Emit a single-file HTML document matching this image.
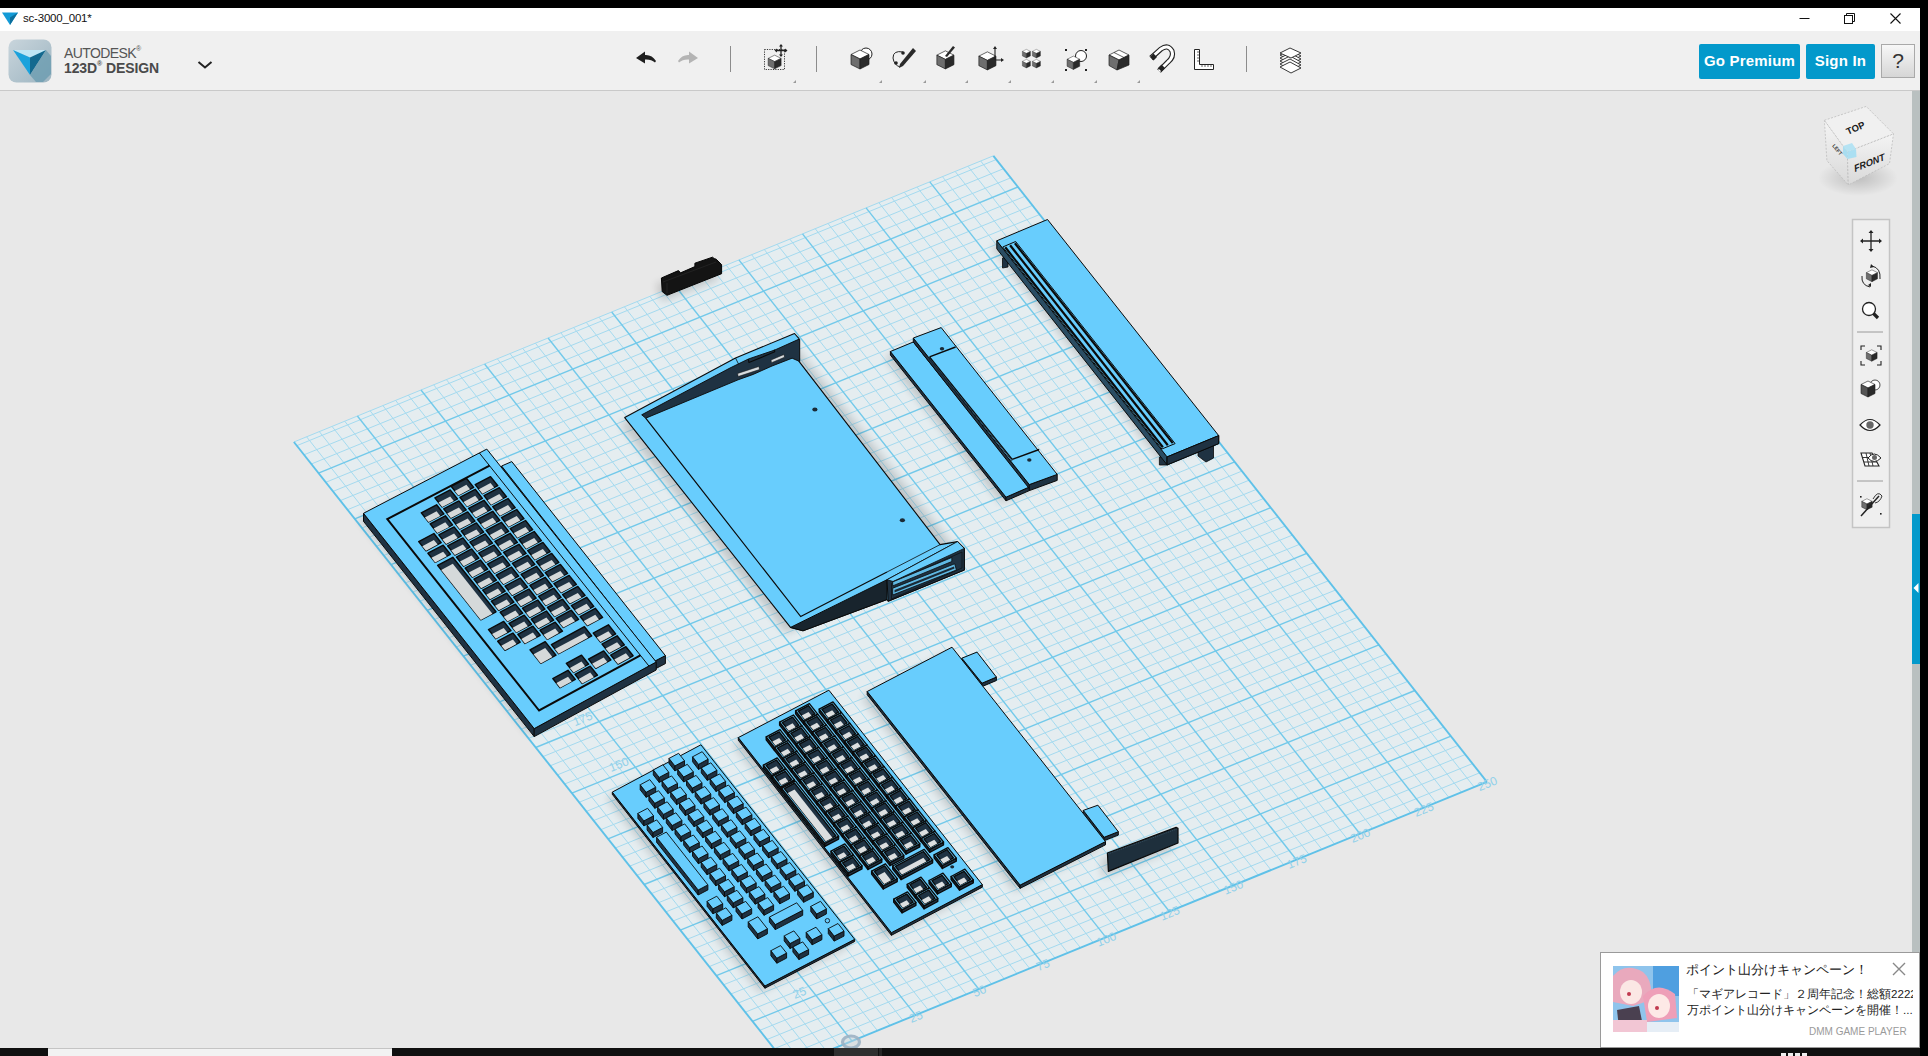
<!DOCTYPE html>
<html><head><meta charset="utf-8"><style>
*{margin:0;padding:0;box-sizing:border-box}
html,body{width:1928px;height:1056px;overflow:hidden;background:#e8e8e8;font-family:"Liberation Sans",sans-serif}
.abs{position:absolute}
#top{left:0;top:0;width:1928px;height:8px;background:#000}
#title{left:0;top:8px;width:1920px;height:23px;background:#fff}
#tb{left:0;top:31px;width:1920px;height:60px;background:#f0f0f0;border-bottom:1px solid #c9c9c9}
#rblack{left:1920px;top:0;width:8px;height:1056px;background:#000}
#vp{left:0;top:91px;width:1920px;height:957px;background:#e8e8e8;overflow:hidden}
#task{left:0;top:1048px;width:1920px;height:8px;background:#101010}
.btn{position:absolute;top:44px;height:35px;background:#0399cb;color:#fff;font-weight:bold;font-size:15px;line-height:33px;text-align:center;border-radius:2px;letter-spacing:0.2px}
</style></head><body>
<div class="abs" id="vp"><svg width="1920" height="957" viewBox="0 91 1920 957" style="position:absolute;left:0;top:0"><polygon points="788.6,1066.9 1486.9,781.9 993.4,155.8 293.9,442.0" fill="#e5edf0"/><g stroke="#a4daef" stroke-width="1.0"><line x1="801.3" y1="1061.7" x2="306.6" y2="436.8" /><line x1="814.0" y1="1056.5" x2="319.3" y2="431.6" /><line x1="826.7" y1="1051.4" x2="332.0" y2="426.4" /><line x1="839.4" y1="1046.2" x2="344.7" y2="421.2" /><line x1="864.7" y1="1035.8" x2="370.1" y2="410.8" /><line x1="877.4" y1="1030.6" x2="382.9" y2="405.6" /><line x1="890.1" y1="1025.5" x2="395.6" y2="400.4" /><line x1="902.8" y1="1020.3" x2="408.3" y2="395.2" /><line x1="928.2" y1="1009.9" x2="433.7" y2="384.8" /><line x1="940.9" y1="1004.8" x2="446.4" y2="379.6" /><line x1="953.6" y1="999.6" x2="459.1" y2="374.4" /><line x1="966.3" y1="994.4" x2="471.8" y2="369.2" /><line x1="991.6" y1="984.0" x2="497.3" y2="358.8" /><line x1="1004.3" y1="978.9" x2="510.0" y2="353.6" /><line x1="1017.0" y1="973.7" x2="522.7" y2="348.4" /><line x1="1029.7" y1="968.5" x2="535.4" y2="343.2" /><line x1="1055.1" y1="958.1" x2="560.8" y2="332.8" /><line x1="1067.8" y1="952.9" x2="573.6" y2="327.6" /><line x1="1080.5" y1="947.8" x2="586.3" y2="322.4" /><line x1="1093.2" y1="942.6" x2="599.0" y2="317.2" /><line x1="1118.6" y1="932.2" x2="624.4" y2="306.8" /><line x1="1131.3" y1="927.0" x2="637.1" y2="301.6" /><line x1="1144.0" y1="921.9" x2="649.9" y2="296.4" /><line x1="1156.7" y1="916.7" x2="662.6" y2="291.2" /><line x1="1182.1" y1="906.3" x2="688.0" y2="280.8" /><line x1="1194.8" y1="901.1" x2="700.7" y2="275.6" /><line x1="1207.5" y1="895.9" x2="713.5" y2="270.4" /><line x1="1220.2" y1="890.8" x2="726.2" y2="265.1" /><line x1="1245.6" y1="880.4" x2="751.6" y2="254.7" /><line x1="1258.3" y1="875.2" x2="764.3" y2="249.5" /><line x1="1271.0" y1="870.0" x2="777.1" y2="244.3" /><line x1="1283.7" y1="864.8" x2="789.8" y2="239.1" /><line x1="1309.1" y1="854.5" x2="815.2" y2="228.7" /><line x1="1321.8" y1="849.3" x2="828.0" y2="223.5" /><line x1="1334.5" y1="844.1" x2="840.7" y2="218.3" /><line x1="1347.2" y1="838.9" x2="853.4" y2="213.1" /><line x1="1372.6" y1="828.6" x2="878.9" y2="202.7" /><line x1="1385.3" y1="823.4" x2="891.6" y2="197.5" /><line x1="1398.0" y1="818.2" x2="904.3" y2="192.3" /><line x1="1410.7" y1="813.0" x2="917.0" y2="187.1" /><line x1="1436.1" y1="802.6" x2="942.5" y2="176.7" /><line x1="1448.8" y1="797.4" x2="955.2" y2="171.5" /><line x1="1461.5" y1="792.3" x2="967.9" y2="166.2" /><line x1="1474.2" y1="787.1" x2="980.7" y2="161.0" /><line x1="781.4" y1="1057.8" x2="1479.7" y2="772.8" /><line x1="774.2" y1="1048.7" x2="1472.5" y2="763.6" /><line x1="767.0" y1="1039.5" x2="1465.3" y2="754.5" /><line x1="759.7" y1="1030.4" x2="1458.1" y2="745.4" /><line x1="745.3" y1="1012.2" x2="1443.7" y2="727.1" /><line x1="738.1" y1="1003.1" x2="1436.5" y2="718.0" /><line x1="730.9" y1="994.0" x2="1429.3" y2="708.8" /><line x1="723.6" y1="984.8" x2="1422.1" y2="699.7" /><line x1="709.2" y1="966.6" x2="1407.7" y2="681.4" /><line x1="702.0" y1="957.5" x2="1400.5" y2="672.3" /><line x1="694.8" y1="948.4" x2="1393.3" y2="663.1" /><line x1="687.5" y1="939.2" x2="1386.1" y2="654.0" /><line x1="673.1" y1="921.0" x2="1371.7" y2="635.7" /><line x1="665.9" y1="911.9" x2="1364.5" y2="626.6" /><line x1="658.6" y1="902.7" x2="1357.3" y2="617.4" /><line x1="651.4" y1="893.6" x2="1350.1" y2="608.3" /><line x1="637.0" y1="875.3" x2="1335.6" y2="590.0" /><line x1="629.7" y1="866.2" x2="1328.4" y2="580.8" /><line x1="622.5" y1="857.1" x2="1321.2" y2="571.7" /><line x1="615.3" y1="848.0" x2="1314.0" y2="562.6" /><line x1="600.8" y1="829.7" x2="1299.6" y2="544.3" /><line x1="593.6" y1="820.6" x2="1292.4" y2="535.1" /><line x1="586.4" y1="811.4" x2="1285.2" y2="526.0" /><line x1="579.1" y1="802.3" x2="1278.0" y2="516.8" /><line x1="564.7" y1="784.0" x2="1263.5" y2="498.5" /><line x1="557.4" y1="774.9" x2="1256.3" y2="489.4" /><line x1="550.2" y1="765.8" x2="1249.1" y2="480.2" /><line x1="543.0" y1="756.6" x2="1241.9" y2="471.1" /><line x1="528.5" y1="738.4" x2="1227.5" y2="452.7" /><line x1="521.3" y1="729.2" x2="1220.2" y2="443.6" /><line x1="514.0" y1="720.1" x2="1213.0" y2="434.4" /><line x1="506.8" y1="710.9" x2="1205.8" y2="425.3" /><line x1="492.3" y1="692.7" x2="1191.4" y2="407.0" /><line x1="485.1" y1="683.5" x2="1184.2" y2="397.8" /><line x1="477.9" y1="674.4" x2="1176.9" y2="388.7" /><line x1="470.6" y1="665.2" x2="1169.7" y2="379.5" /><line x1="456.2" y1="647.0" x2="1155.3" y2="361.2" /><line x1="448.9" y1="637.8" x2="1148.1" y2="352.0" /><line x1="441.7" y1="628.7" x2="1140.8" y2="342.9" /><line x1="434.4" y1="619.5" x2="1133.6" y2="333.7" /><line x1="420.0" y1="601.2" x2="1119.2" y2="315.4" /><line x1="412.7" y1="592.1" x2="1111.9" y2="306.2" /><line x1="405.5" y1="582.9" x2="1104.7" y2="297.0" /><line x1="398.2" y1="573.8" x2="1097.5" y2="287.9" /><line x1="383.7" y1="555.5" x2="1083.0" y2="269.5" /><line x1="376.5" y1="546.3" x2="1075.8" y2="260.4" /><line x1="369.3" y1="537.2" x2="1068.6" y2="251.2" /><line x1="362.0" y1="528.0" x2="1061.4" y2="242.0" /><line x1="347.5" y1="509.7" x2="1046.9" y2="223.7" /><line x1="340.3" y1="500.6" x2="1039.7" y2="214.5" /><line x1="333.0" y1="491.4" x2="1032.4" y2="205.4" /><line x1="325.8" y1="482.3" x2="1025.2" y2="196.2" /><line x1="311.3" y1="464.0" x2="1010.8" y2="177.8" /><line x1="304.0" y1="454.8" x2="1003.5" y2="168.7" /><line x1="296.8" y1="445.7" x2="996.3" y2="159.5" /><line x1="293.9" y1="442.0" x2="993.4" y2="155.8" /></g><g stroke="#72c9ea" stroke-width="1.4"><line x1="852.0" y1="1041.0" x2="357.4" y2="416.0" /><line x1="915.5" y1="1015.1" x2="421.0" y2="390.0" /><line x1="978.9" y1="989.2" x2="484.6" y2="364.0" /><line x1="1042.4" y1="963.3" x2="548.1" y2="338.0" /><line x1="1105.9" y1="937.4" x2="611.7" y2="312.0" /><line x1="1169.4" y1="911.5" x2="675.3" y2="286.0" /><line x1="1232.9" y1="885.6" x2="738.9" y2="259.9" /><line x1="1296.4" y1="859.7" x2="802.5" y2="233.9" /><line x1="1359.9" y1="833.7" x2="866.1" y2="207.9" /><line x1="1423.4" y1="807.8" x2="929.8" y2="181.9" /><line x1="752.5" y1="1021.3" x2="1450.9" y2="736.2" /><line x1="716.4" y1="975.7" x2="1414.9" y2="690.5" /><line x1="680.3" y1="930.1" x2="1378.9" y2="644.8" /><line x1="644.2" y1="884.5" x2="1342.8" y2="599.1" /><line x1="608.1" y1="838.8" x2="1306.8" y2="553.4" /><line x1="571.9" y1="793.2" x2="1270.7" y2="507.7" /><line x1="535.7" y1="747.5" x2="1234.7" y2="461.9" /><line x1="499.6" y1="701.8" x2="1198.6" y2="416.1" /><line x1="463.4" y1="656.1" x2="1162.5" y2="370.3" /><line x1="427.2" y1="610.4" x2="1126.4" y2="324.5" /><line x1="391.0" y1="564.6" x2="1090.3" y2="278.7" /><line x1="354.8" y1="518.9" x2="1054.1" y2="232.9" /><line x1="318.5" y1="473.1" x2="1018.0" y2="187.0" /></g><g stroke="#5fc1e8" stroke-width="1.9"><line x1="788.6" y1="1066.9" x2="1486.9" y2="781.9" /><line x1="1486.9" y1="781.9" x2="993.4" y2="155.8" /><line x1="788.6" y1="1066.9" x2="293.9" y2="442.0" /></g><text transform="translate(917.5,1020.6) rotate(-22)" font-size="12" fill="#92d1ea" text-anchor="middle" style="font-family:'Liberation Sans',sans-serif">25</text><text transform="translate(980.9,994.7) rotate(-22)" font-size="12" fill="#92d1ea" text-anchor="middle" style="font-family:'Liberation Sans',sans-serif">50</text><text transform="translate(1044.4,968.8) rotate(-22)" font-size="12" fill="#92d1ea" text-anchor="middle" style="font-family:'Liberation Sans',sans-serif">75</text><text transform="translate(1107.9,942.9) rotate(-22)" font-size="12" fill="#92d1ea" text-anchor="middle" style="font-family:'Liberation Sans',sans-serif">100</text><text transform="translate(1171.4,917.0) rotate(-22)" font-size="12" fill="#92d1ea" text-anchor="middle" style="font-family:'Liberation Sans',sans-serif">125</text><text transform="translate(1234.9,891.1) rotate(-22)" font-size="12" fill="#92d1ea" text-anchor="middle" style="font-family:'Liberation Sans',sans-serif">150</text><text transform="translate(1298.4,865.2) rotate(-22)" font-size="12" fill="#92d1ea" text-anchor="middle" style="font-family:'Liberation Sans',sans-serif">175</text><text transform="translate(1361.9,839.2) rotate(-22)" font-size="12" fill="#92d1ea" text-anchor="middle" style="font-family:'Liberation Sans',sans-serif">200</text><text transform="translate(1425.4,813.3) rotate(-22)" font-size="12" fill="#92d1ea" text-anchor="middle" style="font-family:'Liberation Sans',sans-serif">225</text><text transform="translate(1488.9,787.4) rotate(-22)" font-size="12" fill="#92d1ea" text-anchor="middle" style="font-family:'Liberation Sans',sans-serif">250</text><text transform="translate(801.0,996.4) rotate(-22)" font-size="12" fill="#92d1ea" text-anchor="middle" style="font-family:'Liberation Sans',sans-serif">25</text><text transform="translate(764.9,950.8) rotate(-22)" font-size="12" fill="#92d1ea" text-anchor="middle" style="font-family:'Liberation Sans',sans-serif">50</text><text transform="translate(728.8,905.2) rotate(-22)" font-size="12" fill="#92d1ea" text-anchor="middle" style="font-family:'Liberation Sans',sans-serif">75</text><text transform="translate(692.7,859.6) rotate(-22)" font-size="12" fill="#92d1ea" text-anchor="middle" style="font-family:'Liberation Sans',sans-serif">100</text><text transform="translate(656.5,813.9) rotate(-22)" font-size="12" fill="#92d1ea" text-anchor="middle" style="font-family:'Liberation Sans',sans-serif">125</text><text transform="translate(620.4,768.2) rotate(-22)" font-size="12" fill="#92d1ea" text-anchor="middle" style="font-family:'Liberation Sans',sans-serif">150</text><text transform="translate(584.2,722.6) rotate(-22)" font-size="12" fill="#92d1ea" text-anchor="middle" style="font-family:'Liberation Sans',sans-serif">175</text><ellipse cx="851.0" cy="1042.0" rx="8.5" ry="6" fill="#c9d3da" fill-opacity="0.5" stroke="#9db3c5" stroke-width="3.2" opacity="0.9"/><defs><filter id="blur" x="-20%" y="-20%" width="140%" height="140%"><feGaussianBlur stdDeviation="4.5"/></filter></defs><g filter="url(#blur)" fill="#000" opacity="0.16"><polygon points="656.0,284.0 717.0,270.0 717.0,280.0 662.0,301.0" fill="#000" /><polygon points="992.0,247.0 1043.0,226.0 1214.0,442.0 1162.0,463.0" fill="#000" /><polygon points="885.0,358.0 936.0,334.0 1052.0,480.0 1001.0,503.0" fill="#000" /><polygon points="620.0,424.0 790.0,340.0 959.0,554.0 786.0,633.0" fill="#000" /><polygon points="359.0,519.0 482.0,455.0 660.0,662.0 529.0,735.0" fill="#000" /><polygon points="862.0,698.0 947.0,653.0 1100.0,848.0 1015.0,891.0" fill="#000" /><polygon points="733.0,744.0 824.0,696.0 977.0,891.0 886.0,939.0" fill="#000" /><polygon points="607.0,798.0 696.0,751.0 850.0,945.0 760.0,992.0" fill="#000" /><polygon points="1102.0,859.0 1173.0,834.0 1173.0,849.0 1103.0,877.0" fill="#000" /></g><polygon points="661.4,278.0 678.4,270.6 680.7,272.8 694.9,266.6 694.9,263.2 712.5,257.2 714.2,258.6 716.2,259.2 721.6,264.6 721.6,273.7 667.0,295.3 662.2,291.6" fill="#141414" stroke="#050505" stroke-width="1.00" stroke-linejoin="round" /><path d="M663,282 L716,262 M667,293 L667,283" stroke="#262626" stroke-width="0.8" fill="none"/><polygon points="1002.5,258.0 1008.0,256.0 1008.0,267.0 1002.5,268.0" fill="#1f3242" stroke="#0a0a0a" stroke-width="0.80" stroke-linejoin="round" /><polygon points="1159.4,457.0 1167.5,457.0 1167.5,465.0 1159.4,465.0" fill="#1f3242" stroke="#0a0a0a" stroke-width="0.80" stroke-linejoin="round" /><polygon points="1198.0,447.0 1213.5,440.0 1213.5,458.0 1206.0,462.0 1198.0,456.0" fill="#1f3242" stroke="#0a0a0a" stroke-width="0.80" stroke-linejoin="round" /><polygon points="996.8,240.8 1167.1,456.9 1167.1,464.9 996.8,248.8" fill="#2a4d63" stroke="#0a0a0a" stroke-width="1.00" stroke-linejoin="round" /><polygon points="1167.1,456.9 1218.7,435.6 1218.7,443.6 1167.1,464.9" fill="#2a4d63" stroke="#0a0a0a" stroke-width="1.00" stroke-linejoin="round" /><polygon points="996.8,240.8 1047.5,219.5 1218.7,435.6 1167.1,456.9" fill="#68cdfd" stroke="#0a0a0a" stroke-width="1.00" stroke-linejoin="round" /><polygon points="1167.1,456.9 1218.7,435.6 1218.7,443.6 1167.1,464.9" fill="#1f3242" stroke="#0a0a0a" stroke-width="1.00" stroke-linejoin="round" /><polygon points="1002.7,247.0 1015.6,241.5 1175.1,443.6 1161.9,449.0" fill="#68cdfd" stroke="#0a0a0a" stroke-width="1.00" stroke-linejoin="round" /><path d="M1005.3,247.3 L1162.9,447.2" stroke="#0a0a0a" stroke-width="2.2"/><path d="M1010.1,245.3 L1167.8,445.2" stroke="#0a0a0a" stroke-width="2.2"/><path d="M1014.9,243.3 L1172.7,443.1" stroke="#0a0a0a" stroke-width="2.2"/><polygon points="890.4,351.5 1006.0,497.2 1006.0,500.8 890.4,355.1" fill="#1f3242" stroke="#0a0a0a" stroke-width="1.00" stroke-linejoin="round" /><polygon points="1006.0,497.2 1029.3,487.0 1029.3,490.6 1006.0,500.8" fill="#1f3242" stroke="#0a0a0a" stroke-width="1.00" stroke-linejoin="round" /><polygon points="890.4,351.5 913.3,342.0 1029.3,487.0 1006.0,497.2" fill="#68cdfd" stroke="#0a0a0a" stroke-width="1.00" stroke-linejoin="round" /><polygon points="913.3,338.0 1029.3,484.6 1029.3,488.6 913.3,342.0" fill="#1f3242" stroke="#0a0a0a" stroke-width="1.00" stroke-linejoin="round" /><polygon points="1029.3,484.6 1057.2,474.4 1057.2,480.4 1029.3,490.6" fill="#1f3242" stroke="#0a0a0a" stroke-width="1.00" stroke-linejoin="round" /><polygon points="913.3,338.0 941.2,327.6 1057.2,474.4 1029.3,484.6" fill="#68cdfd" stroke="#0a0a0a" stroke-width="1.00" stroke-linejoin="round" /><path d="M929.5,356.9 L955.6,347 M1012.2,459.4 L1039.2,449.5 M929.5,356.9 L1012.2,459.4" stroke="#0a0a0a" stroke-width="1.4" fill="none"/><path d="M929.5,358.5 L1012.2,461" stroke="#1f3242" stroke-width="1" fill="none"/><ellipse cx="942" cy="348.8" rx="2.2" ry="1.7" fill="#1a2a36"/><ellipse cx="1029.3" cy="460" rx="2.2" ry="1.7" fill="#1a2a36"/><polygon points="624.7,417.6 735.5,358.0 794.5,333.5 799.0,338.6 799.0,361.4 940.1,544.6 957.5,541.6 964.3,548.4 964.3,570.0 888.2,601.2 887.0,599.5 803.0,630.8 790.5,627.4" fill="#68cdfd" stroke="#0a0a0a" stroke-width="1.10" stroke-linejoin="round" /><polygon points="641.7,414.8 730.0,368.0 748.4,359.0 774.8,350.0 798.0,339.6 799.7,339.3 799.7,361.5 792.1,358.2 772.0,366.0 753.2,374.4 738.1,379.8 645.7,418.2" fill="#1f3242" stroke="#0a0a0a" stroke-width="0.90" stroke-linejoin="round" /><polygon points="737.6,373.5 758.9,366.5 759.5,369.5 738.2,376.5" fill="#d8dde0" stroke="#0a0a0a" stroke-width="0.50" stroke-linejoin="round" /><polygon points="771.0,360.0 784.0,354.5 784.5,357.2 771.5,362.7" fill="#d8dde0" stroke="#0a0a0a" stroke-width="0.50" stroke-linejoin="round" /><path d="M748.9,362.6 L774.8,351.8 M748.4,359 L749,363 M774.3,349.6 L774.8,352" stroke="#0a0a0a" stroke-width="1.1" fill="none"/><path d="M735.5,358 L738.5,364" stroke="#0a0a0a" stroke-width="0.8"/><path d="M645.7,418.2 L800.7,616.6 L887,572" stroke="#0a0a0a" stroke-width="1.2" fill="none"/><polygon points="790.5,627.4 887.0,579.7 887.0,599.5 803.0,630.8" fill="#18242d" stroke="#0a0a0a" stroke-width="1.00" stroke-linejoin="round" /><polygon points="887.0,579.7 957.5,541.6 964.3,548.4 964.3,570.0 888.2,601.2" fill="#1f3242" stroke="#0a0a0a" stroke-width="1.00" stroke-linejoin="round" /><polygon points="887.0,579.7 957.5,541.6 964.3,548.4 893.0,581.5" fill="#68cdfd" stroke="#0a0a0a" stroke-width="0.80" stroke-linejoin="round" /><polygon points="891.5,583.5 962.0,552.0 962.0,568.0 891.5,599.0" fill="#1f3242" stroke="#0a0a0a" stroke-width="0.60" stroke-linejoin="round" /><polygon points="892.7,581.9 951.8,557.5 951.8,561.5 892.7,585.9" fill="#5fb8e3" stroke="#0a0a0a" stroke-width="0.80" stroke-linejoin="round" /><polygon points="892.7,588.2 954.7,563.8 956.4,570.0 892.7,595.0" fill="#5fb8e3" stroke="#0a0a0a" stroke-width="0.80" stroke-linejoin="round" /><polygon points="894.5,590.0 954.0,566.5 954.5,568.5 894.5,592.5" fill="#1a2a36" /><path d="M940.1,544.6 L887,572" stroke="#0a0a0a" stroke-width="0.8"/><ellipse cx="814.9" cy="409.5" rx="2.6" ry="2" fill="#1a2a36"/><ellipse cx="902.4" cy="520.2" rx="2.6" ry="2" fill="#1a2a36"/><polygon points="501.6,466.0 655.0,661.0 655.0,669.0 501.6,474.0" fill="#1f3242" stroke="#0a0a0a" stroke-width="1.00" stroke-linejoin="round" /><polygon points="655.0,661.0 665.4,655.6 665.4,663.6 655.0,669.0" fill="#1f3242" stroke="#0a0a0a" stroke-width="1.00" stroke-linejoin="round" /><polygon points="501.6,466.0 511.8,461.6 665.4,655.6 655.0,661.0" fill="#68cdfd" stroke="#0a0a0a" stroke-width="1.00" stroke-linejoin="round" /><polygon points="363.5,513.3 534.2,728.6 534.2,736.6 363.5,521.3" fill="#1f3242" stroke="#0a0a0a" stroke-width="1.00" stroke-linejoin="round" /><polygon points="534.2,728.6 656.2,662.0 656.2,670.0 534.2,736.6" fill="#1f3242" stroke="#0a0a0a" stroke-width="1.00" stroke-linejoin="round" /><polygon points="363.5,513.3 486.8,449.1 656.2,662.0 534.2,728.6" fill="#68cdfd" stroke="#0a0a0a" stroke-width="1.00" stroke-linejoin="round" /><polyline points="489.6,465.7 387.3,519.1 539.1,710.5 640.4,655.3" fill="none" stroke="#0a0a0a" stroke-width="2.0"/><path d="M479.4,453.0 L648.9,666.0" stroke="#0a0a0a" stroke-width="1"/><polygon points="451.1,486.3 466.4,478.3 473.7,487.4 458.4,495.4" fill="#1f3242" stroke="#0a0a0a" stroke-width="1.40" stroke-linejoin="round" /><polygon points="458.4,495.4 454.8,490.9 466.4,484.8 470.0,489.3" fill="#d5d9da" /><polygon points="434.9,497.9 450.2,489.9 457.5,499.0 442.2,507.0" fill="#1f3242" stroke="#0a0a0a" stroke-width="1.40" stroke-linejoin="round" /><polygon points="442.2,507.0 438.6,502.5 450.2,496.4 453.8,500.9" fill="#d5d9da" /><polygon points="421.3,512.8 436.6,504.8 443.9,514.0 428.6,522.0" fill="#1f3242" stroke="#0a0a0a" stroke-width="1.40" stroke-linejoin="round" /><polygon points="428.6,522.0 424.9,517.4 436.6,511.3 440.2,515.9" fill="#d5d9da" /><polygon points="475.2,484.6 490.5,476.6 497.8,485.7 482.5,493.7" fill="#1f3242" stroke="#0a0a0a" stroke-width="1.40" stroke-linejoin="round" /><polygon points="482.5,493.7 478.9,489.2 490.5,483.1 494.1,487.6" fill="#d5d9da" /><polygon points="459.9,497.3 475.2,489.3 482.4,498.4 467.2,506.4" fill="#1f3242" stroke="#0a0a0a" stroke-width="1.40" stroke-linejoin="round" /><polygon points="467.2,506.4 463.5,501.9 475.2,495.8 478.8,500.3" fill="#d5d9da" /><polygon points="443.7,508.9 458.9,500.9 466.2,510.0 450.9,518.1" fill="#1f3242" stroke="#0a0a0a" stroke-width="1.40" stroke-linejoin="round" /><polygon points="450.9,518.1 447.3,513.5 458.9,507.4 462.6,512.0" fill="#d5d9da" /><polygon points="430.1,523.8 445.3,515.8 452.6,525.0 437.3,533.0" fill="#1f3242" stroke="#0a0a0a" stroke-width="1.40" stroke-linejoin="round" /><polygon points="437.3,533.0 433.7,528.4 445.3,522.3 449.0,526.9" fill="#d5d9da" /><polygon points="484.0,495.6 499.3,487.6 506.5,496.7 491.2,504.7" fill="#1f3242" stroke="#0a0a0a" stroke-width="1.40" stroke-linejoin="round" /><polygon points="491.2,504.7 487.6,500.2 499.3,494.1 502.9,498.6" fill="#d5d9da" /><polygon points="468.6,508.3 483.9,500.3 491.2,509.4 475.9,517.4" fill="#1f3242" stroke="#0a0a0a" stroke-width="1.40" stroke-linejoin="round" /><polygon points="475.9,517.4 472.3,512.9 483.9,506.8 487.5,511.3" fill="#d5d9da" /><polygon points="452.4,519.9 467.7,511.9 475.0,521.1 459.7,529.1" fill="#1f3242" stroke="#0a0a0a" stroke-width="1.40" stroke-linejoin="round" /><polygon points="459.7,529.1 456.1,524.5 467.7,518.4 471.3,523.0" fill="#d5d9da" /><polygon points="418.7,541.6 433.9,533.5 441.2,542.7 426.0,550.8" fill="#1f3242" stroke="#0a0a0a" stroke-width="1.40" stroke-linejoin="round" /><polygon points="426.0,550.8 422.3,546.2 433.9,540.0 437.6,544.6" fill="#d5d9da" /><polygon points="438.8,534.9 454.1,526.9 461.4,536.0 446.1,544.1" fill="#1f3242" stroke="#0a0a0a" stroke-width="1.40" stroke-linejoin="round" /><polygon points="446.1,544.1 442.5,539.5 454.1,533.4 457.7,537.9" fill="#d5d9da" /><polygon points="492.7,506.6 508.0,498.5 515.2,507.6 500.0,515.7" fill="#1f3242" stroke="#0a0a0a" stroke-width="1.40" stroke-linejoin="round" /><polygon points="500.0,515.7 496.4,511.1 508.0,505.0 511.6,509.6" fill="#d5d9da" /><polygon points="477.4,519.3 492.7,511.3 499.9,520.4 484.7,528.4" fill="#1f3242" stroke="#0a0a0a" stroke-width="1.40" stroke-linejoin="round" /><polygon points="484.7,528.4 481.0,523.9 492.7,517.8 496.3,522.3" fill="#d5d9da" /><polygon points="461.2,531.0 476.4,522.9 483.7,532.1 468.4,540.1" fill="#1f3242" stroke="#0a0a0a" stroke-width="1.40" stroke-linejoin="round" /><polygon points="468.4,540.1 464.8,535.5 476.4,529.4 480.1,534.0" fill="#d5d9da" /><polygon points="427.9,553.2 443.2,545.2 450.4,554.3 435.2,562.4" fill="#1f3242" stroke="#0a0a0a" stroke-width="1.40" stroke-linejoin="round" /><polygon points="435.2,562.4 431.5,557.8 443.2,551.7 446.8,556.2" fill="#d5d9da" /><polygon points="447.6,545.9 462.9,537.9 470.1,547.1 454.9,555.1" fill="#1f3242" stroke="#0a0a0a" stroke-width="1.40" stroke-linejoin="round" /><polygon points="454.9,555.1 451.2,550.5 462.9,544.4 466.5,549.0" fill="#d5d9da" /><polygon points="501.5,517.6 516.7,509.5 524.0,518.6 508.7,526.7" fill="#1f3242" stroke="#0a0a0a" stroke-width="1.40" stroke-linejoin="round" /><polygon points="508.7,526.7 505.1,522.1 516.7,516.0 520.3,520.5" fill="#d5d9da" /><polygon points="486.1,530.3 501.4,522.3 508.7,531.4 493.4,539.5" fill="#1f3242" stroke="#0a0a0a" stroke-width="1.40" stroke-linejoin="round" /><polygon points="493.4,539.5 489.8,534.9 501.4,528.8 505.0,533.3" fill="#d5d9da" /><polygon points="469.9,542.0 485.2,533.9 492.5,543.1 477.2,551.1" fill="#1f3242" stroke="#0a0a0a" stroke-width="1.40" stroke-linejoin="round" /><polygon points="477.2,551.1 473.6,546.6 485.2,540.4 488.8,545.0" fill="#d5d9da" /><polygon points="456.4,557.0 471.6,548.9 478.9,558.1 463.7,566.2" fill="#1f3242" stroke="#0a0a0a" stroke-width="1.40" stroke-linejoin="round" /><polygon points="463.7,566.2 460.0,561.6 471.6,555.4 475.3,560.0" fill="#d5d9da" /><polygon points="510.2,528.5 525.5,520.5 532.7,529.6 517.5,537.7" fill="#1f3242" stroke="#0a0a0a" stroke-width="1.40" stroke-linejoin="round" /><polygon points="517.5,537.7 513.8,533.1 525.5,527.0 529.1,531.5" fill="#d5d9da" /><polygon points="494.9,541.3 510.1,533.3 517.4,542.4 502.1,550.5" fill="#1f3242" stroke="#0a0a0a" stroke-width="1.40" stroke-linejoin="round" /><polygon points="502.1,550.5 498.5,545.9 510.1,539.8 513.8,544.3" fill="#d5d9da" /><polygon points="478.7,553.0 493.9,545.0 501.2,554.1 486.0,562.2" fill="#1f3242" stroke="#0a0a0a" stroke-width="1.40" stroke-linejoin="round" /><polygon points="486.0,562.2 482.3,557.6 493.9,551.5 497.6,556.0" fill="#d5d9da" /><polygon points="465.1,568.0 480.4,560.0 487.7,569.1 472.4,577.2" fill="#1f3242" stroke="#0a0a0a" stroke-width="1.40" stroke-linejoin="round" /><polygon points="472.4,577.2 468.8,572.6 480.4,566.5 484.0,571.0" fill="#d5d9da" /><polygon points="518.9,539.5 534.2,531.5 541.4,540.6 526.2,548.7" fill="#1f3242" stroke="#0a0a0a" stroke-width="1.40" stroke-linejoin="round" /><polygon points="526.2,548.7 522.6,544.1 534.2,538.0 537.8,542.5" fill="#d5d9da" /><polygon points="503.6,552.3 518.9,544.3 526.1,553.4 510.9,561.5" fill="#1f3242" stroke="#0a0a0a" stroke-width="1.40" stroke-linejoin="round" /><polygon points="510.9,561.5 507.3,556.9 518.9,550.8 522.5,555.3" fill="#d5d9da" /><polygon points="487.5,564.1 502.7,556.0 510.0,565.1 494.7,573.2" fill="#1f3242" stroke="#0a0a0a" stroke-width="1.40" stroke-linejoin="round" /><polygon points="494.7,573.2 491.1,568.6 502.7,562.5 506.3,567.0" fill="#d5d9da" /><polygon points="437.6,565.4 452.8,557.3 496.0,611.8 480.8,619.9" fill="#1f3242" stroke="#0a0a0a" stroke-width="1.40" stroke-linejoin="round" /><polygon points="480.8,619.9 441.2,569.9 452.8,563.8 492.4,613.7" fill="#d5d9da" /><polygon points="473.9,579.1 489.1,571.0 496.4,580.1 481.2,588.3" fill="#1f3242" stroke="#0a0a0a" stroke-width="1.40" stroke-linejoin="round" /><polygon points="481.2,588.3 477.5,583.7 489.1,577.5 492.8,582.1" fill="#d5d9da" /><polygon points="527.7,550.5 542.9,542.4 550.2,551.6 534.9,559.7" fill="#1f3242" stroke="#0a0a0a" stroke-width="1.40" stroke-linejoin="round" /><polygon points="534.9,559.7 531.3,555.1 542.9,548.9 546.5,553.5" fill="#d5d9da" /><polygon points="512.4,563.4 527.6,555.3 534.9,564.4 519.6,572.5" fill="#1f3242" stroke="#0a0a0a" stroke-width="1.40" stroke-linejoin="round" /><polygon points="519.6,572.5 516.0,567.9 527.6,561.8 531.2,566.3" fill="#d5d9da" /><polygon points="496.2,575.1 511.4,567.0 518.7,576.1 503.5,584.2" fill="#1f3242" stroke="#0a0a0a" stroke-width="1.40" stroke-linejoin="round" /><polygon points="503.5,584.2 499.8,579.7 511.4,573.5 515.1,578.1" fill="#d5d9da" /><polygon points="482.7,590.1 497.9,582.0 505.2,591.2 490.0,599.3" fill="#1f3242" stroke="#0a0a0a" stroke-width="1.40" stroke-linejoin="round" /><polygon points="490.0,599.3 486.3,594.7 497.9,588.5 501.6,593.1" fill="#d5d9da" /><polygon points="536.4,561.5 551.7,553.4 558.9,562.5 543.7,570.7" fill="#1f3242" stroke="#0a0a0a" stroke-width="1.40" stroke-linejoin="round" /><polygon points="543.7,570.7 540.1,566.1 551.7,559.9 555.3,564.5" fill="#d5d9da" /><polygon points="521.1,574.4 536.4,566.3 543.6,575.4 528.4,583.5" fill="#1f3242" stroke="#0a0a0a" stroke-width="1.40" stroke-linejoin="round" /><polygon points="528.4,583.5 524.8,578.9 536.4,572.8 540.0,577.3" fill="#d5d9da" /><polygon points="505.0,586.1 520.2,578.0 527.5,587.1 512.2,595.3" fill="#1f3242" stroke="#0a0a0a" stroke-width="1.40" stroke-linejoin="round" /><polygon points="512.2,595.3 508.6,590.7 520.2,584.5 523.8,589.1" fill="#d5d9da" /><polygon points="491.4,601.2 506.7,593.1 513.9,602.2 498.7,610.3" fill="#1f3242" stroke="#0a0a0a" stroke-width="1.40" stroke-linejoin="round" /><polygon points="498.7,610.3 495.1,605.7 506.7,599.6 510.3,604.1" fill="#d5d9da" /><polygon points="545.2,572.5 560.4,564.4 567.6,573.5 552.4,581.6" fill="#1f3242" stroke="#0a0a0a" stroke-width="1.40" stroke-linejoin="round" /><polygon points="552.4,581.6 548.8,577.1 560.4,570.9 564.0,575.5" fill="#d5d9da" /><polygon points="529.9,585.4 545.1,577.3 552.4,586.4 537.1,594.5" fill="#1f3242" stroke="#0a0a0a" stroke-width="1.40" stroke-linejoin="round" /><polygon points="537.1,594.5 533.5,589.9 545.1,583.8 548.7,588.3" fill="#d5d9da" /><polygon points="513.7,597.1 528.9,589.0 536.2,598.2 521.0,606.3" fill="#1f3242" stroke="#0a0a0a" stroke-width="1.40" stroke-linejoin="round" /><polygon points="521.0,606.3 517.4,601.7 528.9,595.5 532.6,600.1" fill="#d5d9da" /><polygon points="500.2,612.2 515.4,604.1 522.7,613.2 507.5,621.4" fill="#1f3242" stroke="#0a0a0a" stroke-width="1.40" stroke-linejoin="round" /><polygon points="507.5,621.4 503.8,616.8 515.4,610.6 519.1,615.2" fill="#d5d9da" /><polygon points="553.9,583.5 569.1,575.4 576.4,584.5 561.2,592.6" fill="#1f3242" stroke="#0a0a0a" stroke-width="1.40" stroke-linejoin="round" /><polygon points="561.2,592.6 557.5,588.1 569.1,581.9 572.7,586.4" fill="#d5d9da" /><polygon points="538.6,596.4 553.8,588.2 561.1,597.4 545.9,605.5" fill="#1f3242" stroke="#0a0a0a" stroke-width="1.40" stroke-linejoin="round" /><polygon points="545.9,605.5 542.3,600.9 553.8,594.7 557.5,599.3" fill="#d5d9da" /><polygon points="522.5,608.2 537.7,600.0 545.0,609.2 529.8,617.3" fill="#1f3242" stroke="#0a0a0a" stroke-width="1.40" stroke-linejoin="round" /><polygon points="529.8,617.3 526.1,612.7 537.7,606.5 541.3,611.1" fill="#d5d9da" /><polygon points="488.5,629.5 503.7,621.4 511.0,630.6 495.8,638.7" fill="#1f3242" stroke="#0a0a0a" stroke-width="1.40" stroke-linejoin="round" /><polygon points="495.8,638.7 492.1,634.1 503.7,627.9 507.3,632.5" fill="#d5d9da" /><polygon points="509.0,623.3 524.2,615.1 531.5,624.3 516.3,632.4" fill="#1f3242" stroke="#0a0a0a" stroke-width="1.40" stroke-linejoin="round" /><polygon points="516.3,632.4 512.6,627.8 524.2,621.6 527.8,626.2" fill="#d5d9da" /><polygon points="562.6,594.5 577.8,586.4 585.1,595.5 569.9,603.6" fill="#1f3242" stroke="#0a0a0a" stroke-width="1.40" stroke-linejoin="round" /><polygon points="569.9,603.6 566.3,599.1 577.8,592.9 581.5,597.4" fill="#d5d9da" /><polygon points="547.4,607.4 562.6,599.2 569.8,608.4 554.6,616.5" fill="#1f3242" stroke="#0a0a0a" stroke-width="1.40" stroke-linejoin="round" /><polygon points="554.6,616.5 551.0,612.0 562.6,605.7 566.2,610.3" fill="#d5d9da" /><polygon points="531.3,619.2 546.4,611.0 553.7,620.2 538.5,628.3" fill="#1f3242" stroke="#0a0a0a" stroke-width="1.40" stroke-linejoin="round" /><polygon points="538.5,628.3 534.9,623.8 546.4,617.5 550.1,622.1" fill="#d5d9da" /><polygon points="497.7,641.2 512.9,633.0 520.2,642.2 505.0,650.3" fill="#1f3242" stroke="#0a0a0a" stroke-width="1.40" stroke-linejoin="round" /><polygon points="505.0,650.3 501.3,645.7 512.9,639.5 516.5,644.1" fill="#d5d9da" /><polygon points="517.8,634.3 532.9,626.1 540.2,635.3 525.0,643.5" fill="#1f3242" stroke="#0a0a0a" stroke-width="1.40" stroke-linejoin="round" /><polygon points="525.0,643.5 521.4,638.9 532.9,632.6 536.6,637.3" fill="#d5d9da" /><polygon points="571.4,605.5 586.6,597.3 593.8,606.4 578.6,614.6" fill="#1f3242" stroke="#0a0a0a" stroke-width="1.40" stroke-linejoin="round" /><polygon points="578.6,614.6 575.0,610.1 586.6,603.8 590.2,608.4" fill="#d5d9da" /><polygon points="556.1,618.4 571.3,610.2 578.6,619.4 563.4,627.5" fill="#1f3242" stroke="#0a0a0a" stroke-width="1.40" stroke-linejoin="round" /><polygon points="563.4,627.5 559.7,623.0 571.3,616.7 575.0,621.3" fill="#d5d9da" /><polygon points="540.0,630.2 555.2,622.1 562.5,631.2 547.3,639.4" fill="#1f3242" stroke="#0a0a0a" stroke-width="1.40" stroke-linejoin="round" /><polygon points="547.3,639.4 543.6,634.8 555.2,628.6 558.8,633.1" fill="#d5d9da" /><polygon points="580.1,616.5 595.3,608.3 602.6,617.4 587.4,625.6" fill="#1f3242" stroke="#0a0a0a" stroke-width="1.40" stroke-linejoin="round" /><polygon points="587.4,625.6 583.7,621.0 595.3,614.8 598.9,619.4" fill="#d5d9da" /><polygon points="530.0,649.8 545.2,641.6 556.0,655.2 540.8,663.4" fill="#1f3242" stroke="#0a0a0a" stroke-width="1.40" stroke-linejoin="round" /><polygon points="540.8,663.4 533.6,654.3 545.2,648.1 552.4,657.1" fill="#d5d9da" /><polygon points="551.4,644.6 584.4,626.7 591.7,635.9 558.7,653.7" fill="#1f3242" stroke="#0a0a0a" stroke-width="1.40" stroke-linejoin="round" /><polygon points="558.7,653.7 555.0,649.1 584.4,633.2 588.1,637.8" fill="#d5d9da" /><polygon points="593.2,633.0 608.4,624.8 615.7,633.9 600.5,642.1" fill="#1f3242" stroke="#0a0a0a" stroke-width="1.40" stroke-linejoin="round" /><polygon points="600.5,642.1 596.8,637.5 608.4,631.3 612.0,635.8" fill="#d5d9da" /><polygon points="566.3,663.3 581.5,655.1 588.7,664.2 573.6,672.5" fill="#1f3242" stroke="#0a0a0a" stroke-width="1.40" stroke-linejoin="round" /><polygon points="573.6,672.5 569.9,667.9 581.5,661.6 585.1,666.2" fill="#d5d9da" /><polygon points="602.0,644.0 617.1,635.8 624.4,644.9 609.2,653.1" fill="#1f3242" stroke="#0a0a0a" stroke-width="1.40" stroke-linejoin="round" /><polygon points="609.2,653.1 605.6,648.5 617.1,642.3 620.8,646.8" fill="#d5d9da" /><polygon points="552.8,678.5 568.0,670.3 575.3,679.4 560.1,687.7" fill="#1f3242" stroke="#0a0a0a" stroke-width="1.40" stroke-linejoin="round" /><polygon points="560.1,687.7 556.4,683.0 568.0,676.8 571.7,681.4" fill="#d5d9da" /><polygon points="588.5,659.1 603.7,650.9 610.9,660.0 595.8,668.3" fill="#1f3242" stroke="#0a0a0a" stroke-width="1.40" stroke-linejoin="round" /><polygon points="595.8,668.3 592.1,663.7 603.7,657.4 607.3,662.0" fill="#d5d9da" /><polygon points="575.0,674.3 590.2,666.1 597.5,675.2 582.3,683.5" fill="#1f3242" stroke="#0a0a0a" stroke-width="1.40" stroke-linejoin="round" /><polygon points="582.3,683.5 578.7,678.9 590.2,672.6 593.9,677.2" fill="#d5d9da" /><polygon points="610.7,655.0 625.9,646.7 633.1,655.8 618.0,664.1" fill="#1f3242" stroke="#0a0a0a" stroke-width="1.40" stroke-linejoin="round" /><polygon points="618.0,664.1 614.3,659.5 625.9,653.2 629.5,657.8" fill="#d5d9da" /><polygon points="961.9,658.2 982.0,683.2 982.0,686.6 961.9,661.6" fill="#1f3242" stroke="#0a0a0a" stroke-width="1.00" stroke-linejoin="round" /><polygon points="982.0,683.2 996.4,677.1 996.4,680.5 982.0,686.6" fill="#1f3242" stroke="#0a0a0a" stroke-width="1.00" stroke-linejoin="round" /><polygon points="961.9,658.2 977.0,652.1 996.4,677.1 982.0,683.2" fill="#68cdfd" stroke="#0a0a0a" stroke-width="1.00" stroke-linejoin="round" /><polygon points="1083.3,810.4 1104.1,837.3 1104.1,840.7 1083.3,813.8" fill="#1f3242" stroke="#0a0a0a" stroke-width="1.00" stroke-linejoin="round" /><polygon points="1104.1,837.3 1118.3,831.7 1118.3,835.1 1104.1,840.7" fill="#1f3242" stroke="#0a0a0a" stroke-width="1.00" stroke-linejoin="round" /><polygon points="1083.3,810.4 1097.9,805.2 1118.3,831.7 1104.1,837.3" fill="#68cdfd" stroke="#0a0a0a" stroke-width="1.00" stroke-linejoin="round" /><polygon points="867.2,691.5 1020.1,885.1 1020.1,888.3 867.2,694.7" fill="#1f3242" stroke="#0a0a0a" stroke-width="1.00" stroke-linejoin="round" /><polygon points="1020.1,885.1 1105.5,841.6 1105.5,844.8 1020.1,888.3" fill="#1f3242" stroke="#0a0a0a" stroke-width="1.00" stroke-linejoin="round" /><polygon points="867.2,691.5 952.0,647.2 1105.5,841.6 1020.1,885.1" fill="#68cdfd" stroke="#0a0a0a" stroke-width="1.00" stroke-linejoin="round" /><polygon points="1107.4,853.0 1176.1,827.4 1178.0,828.4 1178.0,843.0 1108.4,871.4" fill="#1e2f3c" stroke="#0a0a0a" stroke-width="1.20" stroke-linejoin="round" /><path d="M1108,854 L1177,829" stroke="#3a5566" stroke-width="0.8" stroke-dasharray="1,1"/><polygon points="738.3,737.6 891.4,932.7 891.4,935.3 738.3,740.2" fill="#1f3242" stroke="#0a0a0a" stroke-width="1.00" stroke-linejoin="round" /><polygon points="891.4,932.7 982.3,884.6 982.3,887.2 891.4,935.3" fill="#1f3242" stroke="#0a0a0a" stroke-width="1.00" stroke-linejoin="round" /><polygon points="738.3,737.6 828.9,690.2 982.3,884.6 891.4,932.7" fill="#68cdfd" stroke="#0a0a0a" stroke-width="1.00" stroke-linejoin="round" /><polygon points="795.6,710.8 803.9,721.4 803.9,724.4 795.6,713.8" fill="#1f3242" stroke="#0a0a0a" stroke-width="1.35" stroke-linejoin="round" /><polygon points="803.9,721.4 817.7,714.2 817.7,717.2 803.9,724.4" fill="#1f3242" stroke="#0a0a0a" stroke-width="1.35" stroke-linejoin="round" /><polygon points="795.6,710.8 809.4,703.6 817.7,714.2 803.9,721.4" fill="#68cdfd" stroke="#0a0a0a" stroke-width="1.35" stroke-linejoin="round" /><polygon points="798.3,711.1 808.5,705.7 815.0,713.9 804.8,719.3" fill="#1f3242" stroke="#0a0a0a" stroke-width="1.35" stroke-linejoin="round" /><polygon points="804.8,719.3 801.7,715.5 808.5,711.9 811.5,715.7" fill="#dcdfe0" /><polygon points="779.6,722.2 788.0,732.8 788.0,735.8 779.6,725.2" fill="#1f3242" stroke="#0a0a0a" stroke-width="1.35" stroke-linejoin="round" /><polygon points="788.0,732.8 801.7,725.6 801.7,728.6 788.0,735.8" fill="#1f3242" stroke="#0a0a0a" stroke-width="1.35" stroke-linejoin="round" /><polygon points="779.6,722.2 793.4,715.0 801.7,725.6 788.0,732.8" fill="#68cdfd" stroke="#0a0a0a" stroke-width="1.35" stroke-linejoin="round" /><polygon points="782.3,722.5 792.6,717.1 799.0,725.3 788.8,730.7" fill="#1f3242" stroke="#0a0a0a" stroke-width="1.35" stroke-linejoin="round" /><polygon points="788.8,730.7 785.8,726.9 792.6,723.3 795.6,727.2" fill="#dcdfe0" /><polygon points="766.2,736.9 774.5,747.5 774.5,750.5 766.2,739.9" fill="#1f3242" stroke="#0a0a0a" stroke-width="1.35" stroke-linejoin="round" /><polygon points="774.5,747.5 788.3,740.3 788.3,743.3 774.5,750.5" fill="#1f3242" stroke="#0a0a0a" stroke-width="1.35" stroke-linejoin="round" /><polygon points="766.2,736.9 780.0,729.7 788.3,740.3 774.5,747.5" fill="#68cdfd" stroke="#0a0a0a" stroke-width="1.35" stroke-linejoin="round" /><polygon points="768.9,737.2 779.2,731.8 785.6,740.0 775.4,745.4" fill="#1f3242" stroke="#0a0a0a" stroke-width="1.35" stroke-linejoin="round" /><polygon points="775.4,745.4 772.4,741.5 779.2,738.0 782.2,741.8" fill="#dcdfe0" /><polygon points="819.2,709.1 827.5,719.7 827.5,722.7 819.2,712.1" fill="#1f3242" stroke="#0a0a0a" stroke-width="1.35" stroke-linejoin="round" /><polygon points="827.5,719.7 841.3,712.5 841.3,715.5 827.5,722.7" fill="#1f3242" stroke="#0a0a0a" stroke-width="1.35" stroke-linejoin="round" /><polygon points="819.2,709.1 833.0,701.9 841.3,712.5 827.5,719.7" fill="#68cdfd" stroke="#0a0a0a" stroke-width="1.35" stroke-linejoin="round" /><polygon points="821.9,709.4 832.2,704.0 838.6,712.2 828.4,717.6" fill="#1f3242" stroke="#0a0a0a" stroke-width="1.35" stroke-linejoin="round" /><polygon points="828.4,717.6 825.4,713.8 832.2,710.2 835.2,714.1" fill="#dcdfe0" /><polygon points="804.1,721.6 812.4,732.2 812.4,735.2 804.1,724.6" fill="#1f3242" stroke="#0a0a0a" stroke-width="1.35" stroke-linejoin="round" /><polygon points="812.4,732.2 826.2,725.0 826.2,728.0 812.4,735.2" fill="#1f3242" stroke="#0a0a0a" stroke-width="1.35" stroke-linejoin="round" /><polygon points="804.1,721.6 817.9,714.4 826.2,725.0 812.4,732.2" fill="#68cdfd" stroke="#0a0a0a" stroke-width="1.35" stroke-linejoin="round" /><polygon points="806.8,721.9 817.0,716.5 823.5,724.7 813.3,730.1" fill="#1f3242" stroke="#0a0a0a" stroke-width="1.35" stroke-linejoin="round" /><polygon points="813.3,730.1 810.3,726.3 817.0,722.7 820.1,726.5" fill="#dcdfe0" /><polygon points="788.1,733.0 796.5,743.6 796.5,746.6 788.1,736.0" fill="#1f3242" stroke="#0a0a0a" stroke-width="1.35" stroke-linejoin="round" /><polygon points="796.5,743.6 810.2,736.4 810.2,739.4 796.5,746.6" fill="#1f3242" stroke="#0a0a0a" stroke-width="1.35" stroke-linejoin="round" /><polygon points="788.1,733.0 801.9,725.8 810.2,736.4 796.5,743.6" fill="#68cdfd" stroke="#0a0a0a" stroke-width="1.35" stroke-linejoin="round" /><polygon points="790.8,733.3 801.1,727.9 807.5,736.2 797.3,741.5" fill="#1f3242" stroke="#0a0a0a" stroke-width="1.35" stroke-linejoin="round" /><polygon points="797.3,741.5 794.3,737.7 801.1,734.1 804.1,738.0" fill="#dcdfe0" /><polygon points="774.7,747.7 783.0,758.3 783.0,761.3 774.7,750.7" fill="#1f3242" stroke="#0a0a0a" stroke-width="1.35" stroke-linejoin="round" /><polygon points="783.0,758.3 796.8,751.1 796.8,754.1 783.0,761.3" fill="#1f3242" stroke="#0a0a0a" stroke-width="1.35" stroke-linejoin="round" /><polygon points="774.7,747.7 788.5,740.5 796.8,751.1 783.0,758.3" fill="#68cdfd" stroke="#0a0a0a" stroke-width="1.35" stroke-linejoin="round" /><polygon points="777.4,748.0 787.7,742.6 794.1,750.8 783.9,756.2" fill="#1f3242" stroke="#0a0a0a" stroke-width="1.35" stroke-linejoin="round" /><polygon points="783.9,756.2 780.9,752.4 787.7,748.8 790.7,752.6" fill="#dcdfe0" /><polygon points="827.7,719.9 836.1,730.5 836.1,733.5 827.7,722.9" fill="#1f3242" stroke="#0a0a0a" stroke-width="1.35" stroke-linejoin="round" /><polygon points="836.1,730.5 849.8,723.3 849.8,726.3 836.1,733.5" fill="#1f3242" stroke="#0a0a0a" stroke-width="1.35" stroke-linejoin="round" /><polygon points="827.7,719.9 841.5,712.7 849.8,723.3 836.1,730.5" fill="#68cdfd" stroke="#0a0a0a" stroke-width="1.35" stroke-linejoin="round" /><polygon points="830.4,720.2 840.7,714.8 847.1,723.0 836.9,728.4" fill="#1f3242" stroke="#0a0a0a" stroke-width="1.35" stroke-linejoin="round" /><polygon points="836.9,728.4 833.9,724.6 840.7,721.0 843.7,724.8" fill="#dcdfe0" /><polygon points="812.6,732.4 820.9,743.0 820.9,746.0 812.6,735.4" fill="#1f3242" stroke="#0a0a0a" stroke-width="1.35" stroke-linejoin="round" /><polygon points="820.9,743.0 834.7,735.8 834.7,738.8 820.9,746.0" fill="#1f3242" stroke="#0a0a0a" stroke-width="1.35" stroke-linejoin="round" /><polygon points="812.6,732.4 826.4,725.2 834.7,735.8 820.9,743.0" fill="#68cdfd" stroke="#0a0a0a" stroke-width="1.35" stroke-linejoin="round" /><polygon points="815.3,732.7 825.6,727.3 832.0,735.5 821.8,740.9" fill="#1f3242" stroke="#0a0a0a" stroke-width="1.35" stroke-linejoin="round" /><polygon points="821.8,740.9 818.8,737.1 825.6,733.5 828.6,737.3" fill="#dcdfe0" /><polygon points="796.6,743.9 805.0,754.5 805.0,757.5 796.6,746.9" fill="#1f3242" stroke="#0a0a0a" stroke-width="1.35" stroke-linejoin="round" /><polygon points="805.0,754.5 818.7,747.2 818.7,750.2 805.0,757.5" fill="#1f3242" stroke="#0a0a0a" stroke-width="1.35" stroke-linejoin="round" /><polygon points="796.6,743.9 810.4,736.6 818.7,747.2 805.0,754.5" fill="#68cdfd" stroke="#0a0a0a" stroke-width="1.35" stroke-linejoin="round" /><polygon points="799.3,744.1 809.6,738.7 816.0,747.0 805.8,752.3" fill="#1f3242" stroke="#0a0a0a" stroke-width="1.35" stroke-linejoin="round" /><polygon points="805.8,752.3 802.8,748.5 809.6,744.9 812.6,748.8" fill="#dcdfe0" /><polygon points="763.4,765.1 771.7,775.7 771.7,778.7 763.4,768.1" fill="#1f3242" stroke="#0a0a0a" stroke-width="1.35" stroke-linejoin="round" /><polygon points="771.7,775.7 785.5,768.5 785.5,771.5 771.7,778.7" fill="#1f3242" stroke="#0a0a0a" stroke-width="1.35" stroke-linejoin="round" /><polygon points="763.4,765.1 777.2,757.9 785.5,768.5 771.7,775.7" fill="#68cdfd" stroke="#0a0a0a" stroke-width="1.35" stroke-linejoin="round" /><polygon points="766.1,765.4 776.4,760.0 782.8,768.2 772.6,773.6" fill="#1f3242" stroke="#0a0a0a" stroke-width="1.35" stroke-linejoin="round" /><polygon points="772.6,773.6 769.6,769.7 776.4,766.2 779.4,770.0" fill="#dcdfe0" /><polygon points="783.2,758.5 791.5,769.1 791.5,772.1 783.2,761.5" fill="#1f3242" stroke="#0a0a0a" stroke-width="1.35" stroke-linejoin="round" /><polygon points="791.5,769.1 805.3,761.9 805.3,764.9 791.5,772.1" fill="#1f3242" stroke="#0a0a0a" stroke-width="1.35" stroke-linejoin="round" /><polygon points="783.2,758.5 797.0,751.3 805.3,761.9 791.5,769.1" fill="#68cdfd" stroke="#0a0a0a" stroke-width="1.35" stroke-linejoin="round" /><polygon points="785.9,758.8 796.2,753.4 802.6,761.6 792.4,767.0" fill="#1f3242" stroke="#0a0a0a" stroke-width="1.35" stroke-linejoin="round" /><polygon points="792.4,767.0 789.4,763.2 796.2,759.6 799.2,763.4" fill="#dcdfe0" /><polygon points="836.2,730.7 844.6,741.3 844.6,744.3 836.2,733.7" fill="#1f3242" stroke="#0a0a0a" stroke-width="1.35" stroke-linejoin="round" /><polygon points="844.6,741.3 858.4,734.1 858.4,737.1 844.6,744.3" fill="#1f3242" stroke="#0a0a0a" stroke-width="1.35" stroke-linejoin="round" /><polygon points="836.2,730.7 850.0,723.5 858.4,734.1 844.6,741.3" fill="#68cdfd" stroke="#0a0a0a" stroke-width="1.35" stroke-linejoin="round" /><polygon points="838.9,731.0 849.2,725.6 855.7,733.8 845.4,739.2" fill="#1f3242" stroke="#0a0a0a" stroke-width="1.35" stroke-linejoin="round" /><polygon points="845.4,739.2 842.4,735.4 849.2,731.8 852.2,735.6" fill="#dcdfe0" /><polygon points="821.1,743.2 829.4,753.8 829.4,756.8 821.1,746.2" fill="#1f3242" stroke="#0a0a0a" stroke-width="1.35" stroke-linejoin="round" /><polygon points="829.4,753.8 843.2,746.6 843.2,749.6 829.4,756.8" fill="#1f3242" stroke="#0a0a0a" stroke-width="1.35" stroke-linejoin="round" /><polygon points="821.1,743.2 834.9,736.0 843.2,746.6 829.4,753.8" fill="#68cdfd" stroke="#0a0a0a" stroke-width="1.35" stroke-linejoin="round" /><polygon points="823.8,743.5 834.1,738.1 840.5,746.3 830.3,751.7" fill="#1f3242" stroke="#0a0a0a" stroke-width="1.35" stroke-linejoin="round" /><polygon points="830.3,751.7 827.3,747.9 834.1,744.3 837.1,748.1" fill="#dcdfe0" /><polygon points="805.1,754.7 813.5,765.3 813.5,768.3 805.1,757.7" fill="#1f3242" stroke="#0a0a0a" stroke-width="1.35" stroke-linejoin="round" /><polygon points="813.5,765.3 827.3,758.0 827.3,761.0 813.5,768.3" fill="#1f3242" stroke="#0a0a0a" stroke-width="1.35" stroke-linejoin="round" /><polygon points="805.1,754.7 818.9,747.4 827.3,758.0 813.5,765.3" fill="#68cdfd" stroke="#0a0a0a" stroke-width="1.35" stroke-linejoin="round" /><polygon points="807.8,754.9 818.1,749.6 824.6,757.8 814.3,763.1" fill="#1f3242" stroke="#0a0a0a" stroke-width="1.35" stroke-linejoin="round" /><polygon points="814.3,763.1 811.3,759.3 818.1,755.8 821.1,759.6" fill="#dcdfe0" /><polygon points="772.3,776.5 780.6,787.1 780.6,790.1 772.3,779.5" fill="#1f3242" stroke="#0a0a0a" stroke-width="1.35" stroke-linejoin="round" /><polygon points="780.6,787.1 794.4,779.8 794.4,782.8 780.6,790.1" fill="#1f3242" stroke="#0a0a0a" stroke-width="1.35" stroke-linejoin="round" /><polygon points="772.3,776.5 786.1,769.2 794.4,779.8 780.6,787.1" fill="#68cdfd" stroke="#0a0a0a" stroke-width="1.35" stroke-linejoin="round" /><polygon points="775.0,776.7 785.3,771.3 791.7,779.6 781.5,784.9" fill="#1f3242" stroke="#0a0a0a" stroke-width="1.35" stroke-linejoin="round" /><polygon points="781.5,784.9 778.5,781.1 785.3,777.5 788.3,781.4" fill="#dcdfe0" /><polygon points="791.7,769.3 800.0,780.0 800.0,783.0 791.7,772.3" fill="#1f3242" stroke="#0a0a0a" stroke-width="1.35" stroke-linejoin="round" /><polygon points="800.0,780.0 813.8,772.7 813.8,775.7 800.0,783.0" fill="#1f3242" stroke="#0a0a0a" stroke-width="1.35" stroke-linejoin="round" /><polygon points="791.7,769.3 805.5,762.1 813.8,772.7 800.0,780.0" fill="#68cdfd" stroke="#0a0a0a" stroke-width="1.35" stroke-linejoin="round" /><polygon points="794.4,769.6 804.7,764.2 811.1,772.5 800.9,777.8" fill="#1f3242" stroke="#0a0a0a" stroke-width="1.35" stroke-linejoin="round" /><polygon points="800.9,777.8 797.9,774.0 804.7,770.4 807.7,774.3" fill="#dcdfe0" /><polygon points="844.7,741.5 853.1,752.1 853.1,755.1 844.7,744.5" fill="#1f3242" stroke="#0a0a0a" stroke-width="1.35" stroke-linejoin="round" /><polygon points="853.1,752.1 866.9,744.9 866.9,747.9 853.1,755.1" fill="#1f3242" stroke="#0a0a0a" stroke-width="1.35" stroke-linejoin="round" /><polygon points="844.7,741.5 858.5,734.3 866.9,744.9 853.1,752.1" fill="#68cdfd" stroke="#0a0a0a" stroke-width="1.35" stroke-linejoin="round" /><polygon points="847.4,741.8 857.7,736.4 864.2,744.6 853.9,750.0" fill="#1f3242" stroke="#0a0a0a" stroke-width="1.35" stroke-linejoin="round" /><polygon points="853.9,750.0 850.9,746.2 857.7,742.6 860.7,746.4" fill="#dcdfe0" /><polygon points="829.6,754.0 837.9,764.6 837.9,767.6 829.6,757.0" fill="#1f3242" stroke="#0a0a0a" stroke-width="1.35" stroke-linejoin="round" /><polygon points="837.9,764.6 851.7,757.4 851.7,760.4 837.9,767.6" fill="#1f3242" stroke="#0a0a0a" stroke-width="1.35" stroke-linejoin="round" /><polygon points="829.6,754.0 843.4,746.8 851.7,757.4 837.9,764.6" fill="#68cdfd" stroke="#0a0a0a" stroke-width="1.35" stroke-linejoin="round" /><polygon points="832.3,754.3 842.6,748.9 849.0,757.1 838.8,762.5" fill="#1f3242" stroke="#0a0a0a" stroke-width="1.35" stroke-linejoin="round" /><polygon points="838.8,762.5 835.8,758.7 842.6,755.1 845.6,758.9" fill="#dcdfe0" /><polygon points="813.6,765.5 822.0,776.1 822.0,779.1 813.6,768.5" fill="#1f3242" stroke="#0a0a0a" stroke-width="1.35" stroke-linejoin="round" /><polygon points="822.0,776.1 835.8,768.8 835.8,771.8 822.0,779.1" fill="#1f3242" stroke="#0a0a0a" stroke-width="1.35" stroke-linejoin="round" /><polygon points="813.6,765.5 827.4,758.2 835.8,768.8 822.0,776.1" fill="#68cdfd" stroke="#0a0a0a" stroke-width="1.35" stroke-linejoin="round" /><polygon points="816.3,765.7 826.6,760.4 833.1,768.6 822.8,774.0" fill="#1f3242" stroke="#0a0a0a" stroke-width="1.35" stroke-linejoin="round" /><polygon points="822.8,774.0 819.8,770.1 826.6,766.6 829.6,770.4" fill="#dcdfe0" /><polygon points="800.2,780.2 808.5,790.8 808.5,793.8 800.2,783.2" fill="#1f3242" stroke="#0a0a0a" stroke-width="1.35" stroke-linejoin="round" /><polygon points="808.5,790.8 822.3,783.5 822.3,786.5 808.5,793.8" fill="#1f3242" stroke="#0a0a0a" stroke-width="1.35" stroke-linejoin="round" /><polygon points="800.2,780.2 814.0,772.9 822.3,783.5 808.5,790.8" fill="#68cdfd" stroke="#0a0a0a" stroke-width="1.35" stroke-linejoin="round" /><polygon points="802.9,780.4 813.2,775.0 819.6,783.3 809.4,788.7" fill="#1f3242" stroke="#0a0a0a" stroke-width="1.35" stroke-linejoin="round" /><polygon points="809.4,788.7 806.4,784.8 813.2,781.2 816.2,785.1" fill="#dcdfe0" /><polygon points="853.3,752.3 861.6,762.9 861.6,765.9 853.3,755.3" fill="#1f3242" stroke="#0a0a0a" stroke-width="1.35" stroke-linejoin="round" /><polygon points="861.6,762.9 875.4,755.7 875.4,758.7 861.6,765.9" fill="#1f3242" stroke="#0a0a0a" stroke-width="1.35" stroke-linejoin="round" /><polygon points="853.3,752.3 867.0,745.1 875.4,755.7 861.6,762.9" fill="#68cdfd" stroke="#0a0a0a" stroke-width="1.35" stroke-linejoin="round" /><polygon points="856.0,752.6 866.2,747.2 872.7,755.4 862.4,760.8" fill="#1f3242" stroke="#0a0a0a" stroke-width="1.35" stroke-linejoin="round" /><polygon points="862.4,760.8 859.4,757.0 866.2,753.4 869.2,757.2" fill="#dcdfe0" /><polygon points="838.1,764.8 846.5,775.4 846.5,778.4 838.1,767.8" fill="#1f3242" stroke="#0a0a0a" stroke-width="1.35" stroke-linejoin="round" /><polygon points="846.5,775.4 860.3,768.2 860.3,771.2 846.5,778.4" fill="#1f3242" stroke="#0a0a0a" stroke-width="1.35" stroke-linejoin="round" /><polygon points="838.1,764.8 851.9,757.6 860.3,768.2 846.5,775.4" fill="#68cdfd" stroke="#0a0a0a" stroke-width="1.35" stroke-linejoin="round" /><polygon points="840.8,765.1 851.1,759.7 857.5,767.9 847.3,773.3" fill="#1f3242" stroke="#0a0a0a" stroke-width="1.35" stroke-linejoin="round" /><polygon points="847.3,773.3 844.3,769.5 851.1,765.9 854.1,769.7" fill="#dcdfe0" /><polygon points="822.1,776.3 830.5,786.9 830.5,789.9 822.1,779.3" fill="#1f3242" stroke="#0a0a0a" stroke-width="1.35" stroke-linejoin="round" /><polygon points="830.5,786.9 844.3,779.6 844.3,782.6 830.5,789.9" fill="#1f3242" stroke="#0a0a0a" stroke-width="1.35" stroke-linejoin="round" /><polygon points="822.1,776.3 835.9,769.1 844.3,779.6 830.5,786.9" fill="#68cdfd" stroke="#0a0a0a" stroke-width="1.35" stroke-linejoin="round" /><polygon points="824.8,776.6 835.1,771.2 841.6,779.4 831.3,784.8" fill="#1f3242" stroke="#0a0a0a" stroke-width="1.35" stroke-linejoin="round" /><polygon points="831.3,784.8 828.3,780.9 835.1,777.4 838.1,781.2" fill="#dcdfe0" /><polygon points="808.7,791.0 817.0,801.6 817.0,804.6 808.7,794.0" fill="#1f3242" stroke="#0a0a0a" stroke-width="1.35" stroke-linejoin="round" /><polygon points="817.0,801.6 830.8,794.3 830.8,797.3 817.0,804.6" fill="#1f3242" stroke="#0a0a0a" stroke-width="1.35" stroke-linejoin="round" /><polygon points="808.7,791.0 822.5,783.7 830.8,794.3 817.0,801.6" fill="#68cdfd" stroke="#0a0a0a" stroke-width="1.35" stroke-linejoin="round" /><polygon points="811.4,791.2 821.7,785.9 828.1,794.1 817.9,799.5" fill="#1f3242" stroke="#0a0a0a" stroke-width="1.35" stroke-linejoin="round" /><polygon points="817.9,799.5 814.9,795.6 821.7,792.1 824.7,795.9" fill="#dcdfe0" /><polygon points="861.8,763.1 870.1,773.7 870.1,776.7 861.8,766.1" fill="#1f3242" stroke="#0a0a0a" stroke-width="1.35" stroke-linejoin="round" /><polygon points="870.1,773.7 883.9,766.5 883.9,769.5 870.1,776.7" fill="#1f3242" stroke="#0a0a0a" stroke-width="1.35" stroke-linejoin="round" /><polygon points="861.8,763.1 875.6,755.9 883.9,766.5 870.1,773.7" fill="#68cdfd" stroke="#0a0a0a" stroke-width="1.35" stroke-linejoin="round" /><polygon points="864.5,763.4 874.7,758.0 881.2,766.2 870.9,771.6" fill="#1f3242" stroke="#0a0a0a" stroke-width="1.35" stroke-linejoin="round" /><polygon points="870.9,771.6 867.9,767.8 874.7,764.2 877.7,768.0" fill="#dcdfe0" /><polygon points="846.6,775.7 855.0,786.2 855.0,789.2 846.6,778.7" fill="#1f3242" stroke="#0a0a0a" stroke-width="1.35" stroke-linejoin="round" /><polygon points="855.0,786.2 868.8,779.0 868.8,782.0 855.0,789.2" fill="#1f3242" stroke="#0a0a0a" stroke-width="1.35" stroke-linejoin="round" /><polygon points="846.6,775.7 860.4,768.4 868.8,779.0 855.0,786.2" fill="#68cdfd" stroke="#0a0a0a" stroke-width="1.35" stroke-linejoin="round" /><polygon points="849.3,775.9 859.6,770.5 866.1,778.7 855.8,784.1" fill="#1f3242" stroke="#0a0a0a" stroke-width="1.35" stroke-linejoin="round" /><polygon points="855.8,784.1 852.8,780.3 859.6,776.7 862.6,780.5" fill="#dcdfe0" /><polygon points="830.6,787.1 839.0,797.7 839.0,800.7 830.6,790.1" fill="#1f3242" stroke="#0a0a0a" stroke-width="1.35" stroke-linejoin="round" /><polygon points="839.0,797.7 852.8,790.4 852.8,793.4 839.0,800.7" fill="#1f3242" stroke="#0a0a0a" stroke-width="1.35" stroke-linejoin="round" /><polygon points="830.6,787.1 844.4,779.9 852.8,790.4 839.0,797.7" fill="#68cdfd" stroke="#0a0a0a" stroke-width="1.35" stroke-linejoin="round" /><polygon points="833.3,787.4 843.6,782.0 850.1,790.2 839.8,795.6" fill="#1f3242" stroke="#0a0a0a" stroke-width="1.35" stroke-linejoin="round" /><polygon points="839.8,795.6 836.8,791.8 843.6,788.2 846.6,792.0" fill="#dcdfe0" /><polygon points="781.7,788.4 824.8,843.4 824.8,846.4 781.7,791.4" fill="#1f3242" stroke="#0a0a0a" stroke-width="1.35" stroke-linejoin="round" /><polygon points="824.8,843.4 838.6,836.1 838.6,839.1 824.8,846.4" fill="#1f3242" stroke="#0a0a0a" stroke-width="1.35" stroke-linejoin="round" /><polygon points="781.7,788.4 795.5,781.1 838.6,836.1 824.8,843.4" fill="#68cdfd" stroke="#0a0a0a" stroke-width="1.35" stroke-linejoin="round" /><polygon points="784.4,788.6 794.6,783.2 835.9,835.8 825.7,841.2" fill="#1f3242" stroke="#0a0a0a" stroke-width="1.35" stroke-linejoin="round" /><polygon points="825.7,841.2 787.8,793.0 794.6,789.4 832.5,837.7" fill="#dcdfe0" /><polygon points="817.2,801.8 825.5,812.4 825.5,815.4 817.2,804.8" fill="#1f3242" stroke="#0a0a0a" stroke-width="1.35" stroke-linejoin="round" /><polygon points="825.5,812.4 839.3,805.2 839.3,808.2 825.5,815.4" fill="#1f3242" stroke="#0a0a0a" stroke-width="1.35" stroke-linejoin="round" /><polygon points="817.2,801.8 831.0,794.6 839.3,805.2 825.5,812.4" fill="#68cdfd" stroke="#0a0a0a" stroke-width="1.35" stroke-linejoin="round" /><polygon points="819.9,802.1 830.2,796.7 836.6,804.9 826.4,810.3" fill="#1f3242" stroke="#0a0a0a" stroke-width="1.35" stroke-linejoin="round" /><polygon points="826.4,810.3 823.4,806.5 830.2,802.9 833.2,806.7" fill="#dcdfe0" /><polygon points="870.3,773.9 878.6,784.5 878.6,787.5 870.3,776.9" fill="#1f3242" stroke="#0a0a0a" stroke-width="1.35" stroke-linejoin="round" /><polygon points="878.6,784.5 892.4,777.2 892.4,780.2 878.6,787.5" fill="#1f3242" stroke="#0a0a0a" stroke-width="1.35" stroke-linejoin="round" /><polygon points="870.3,773.9 884.1,766.7 892.4,777.2 878.6,784.5" fill="#68cdfd" stroke="#0a0a0a" stroke-width="1.35" stroke-linejoin="round" /><polygon points="873.0,774.2 883.2,768.8 889.7,777.0 879.4,782.4" fill="#1f3242" stroke="#0a0a0a" stroke-width="1.35" stroke-linejoin="round" /><polygon points="879.4,782.4 876.4,778.6 883.2,775.0 886.2,778.8" fill="#dcdfe0" /><polygon points="855.1,786.5 863.5,797.0 863.5,800.0 855.1,789.5" fill="#1f3242" stroke="#0a0a0a" stroke-width="1.35" stroke-linejoin="round" /><polygon points="863.5,797.0 877.3,789.8 877.3,792.8 863.5,800.0" fill="#1f3242" stroke="#0a0a0a" stroke-width="1.35" stroke-linejoin="round" /><polygon points="855.1,786.5 868.9,779.2 877.3,789.8 863.5,797.0" fill="#68cdfd" stroke="#0a0a0a" stroke-width="1.35" stroke-linejoin="round" /><polygon points="857.8,786.7 868.1,781.3 874.6,789.5 864.3,794.9" fill="#1f3242" stroke="#0a0a0a" stroke-width="1.35" stroke-linejoin="round" /><polygon points="864.3,794.9 861.3,791.1 868.1,787.5 871.1,791.3" fill="#dcdfe0" /><polygon points="839.1,797.9 847.5,808.5 847.5,811.5 839.1,800.9" fill="#1f3242" stroke="#0a0a0a" stroke-width="1.35" stroke-linejoin="round" /><polygon points="847.5,808.5 861.3,801.3 861.3,804.3 847.5,811.5" fill="#1f3242" stroke="#0a0a0a" stroke-width="1.35" stroke-linejoin="round" /><polygon points="839.1,797.9 852.9,790.7 861.3,801.3 847.5,808.5" fill="#68cdfd" stroke="#0a0a0a" stroke-width="1.35" stroke-linejoin="round" /><polygon points="841.8,798.2 852.1,792.8 858.6,801.0 848.3,806.4" fill="#1f3242" stroke="#0a0a0a" stroke-width="1.35" stroke-linejoin="round" /><polygon points="848.3,806.4 845.3,802.6 852.1,799.0 855.1,802.8" fill="#dcdfe0" /><polygon points="825.7,812.6 834.0,823.2 834.0,826.2 825.7,815.6" fill="#1f3242" stroke="#0a0a0a" stroke-width="1.35" stroke-linejoin="round" /><polygon points="834.0,823.2 847.8,816.0 847.8,819.0 834.0,826.2" fill="#1f3242" stroke="#0a0a0a" stroke-width="1.35" stroke-linejoin="round" /><polygon points="825.7,812.6 839.5,805.4 847.8,816.0 834.0,823.2" fill="#68cdfd" stroke="#0a0a0a" stroke-width="1.35" stroke-linejoin="round" /><polygon points="828.4,812.9 838.7,807.5 845.1,815.7 834.9,821.1" fill="#1f3242" stroke="#0a0a0a" stroke-width="1.35" stroke-linejoin="round" /><polygon points="834.9,821.1 831.9,817.3 838.7,813.7 841.7,817.5" fill="#dcdfe0" /><polygon points="878.8,784.7 887.1,795.3 887.1,798.3 878.8,787.7" fill="#1f3242" stroke="#0a0a0a" stroke-width="1.35" stroke-linejoin="round" /><polygon points="887.1,795.3 900.9,788.0 900.9,791.0 887.1,798.3" fill="#1f3242" stroke="#0a0a0a" stroke-width="1.35" stroke-linejoin="round" /><polygon points="878.8,784.7 892.6,777.5 900.9,788.0 887.1,795.3" fill="#68cdfd" stroke="#0a0a0a" stroke-width="1.35" stroke-linejoin="round" /><polygon points="881.5,785.0 891.7,779.6 898.2,787.8 888.0,793.2" fill="#1f3242" stroke="#0a0a0a" stroke-width="1.35" stroke-linejoin="round" /><polygon points="888.0,793.2 884.9,789.4 891.7,785.8 894.8,789.6" fill="#dcdfe0" /><polygon points="863.6,797.3 872.0,807.9 872.0,810.9 863.6,800.3" fill="#1f3242" stroke="#0a0a0a" stroke-width="1.35" stroke-linejoin="round" /><polygon points="872.0,807.9 885.8,800.6 885.8,803.6 872.0,810.9" fill="#1f3242" stroke="#0a0a0a" stroke-width="1.35" stroke-linejoin="round" /><polygon points="863.6,797.3 877.4,790.0 885.8,800.6 872.0,807.9" fill="#68cdfd" stroke="#0a0a0a" stroke-width="1.35" stroke-linejoin="round" /><polygon points="866.3,797.5 876.6,792.1 883.1,800.3 872.8,805.7" fill="#1f3242" stroke="#0a0a0a" stroke-width="1.35" stroke-linejoin="round" /><polygon points="872.8,805.7 869.8,801.9 876.6,798.3 879.6,802.1" fill="#dcdfe0" /><polygon points="847.6,808.7 856.0,819.3 856.0,822.3 847.6,811.7" fill="#1f3242" stroke="#0a0a0a" stroke-width="1.35" stroke-linejoin="round" /><polygon points="856.0,819.3 869.8,812.1 869.8,815.1 856.0,822.3" fill="#1f3242" stroke="#0a0a0a" stroke-width="1.35" stroke-linejoin="round" /><polygon points="847.6,808.7 861.4,801.5 869.8,812.1 856.0,819.3" fill="#68cdfd" stroke="#0a0a0a" stroke-width="1.35" stroke-linejoin="round" /><polygon points="850.4,809.0 860.6,803.6 867.1,811.8 856.8,817.2" fill="#1f3242" stroke="#0a0a0a" stroke-width="1.35" stroke-linejoin="round" /><polygon points="856.8,817.2 853.8,813.4 860.6,809.8 863.6,813.6" fill="#dcdfe0" /><polygon points="834.2,823.4 842.5,834.0 842.5,837.0 834.2,826.4" fill="#1f3242" stroke="#0a0a0a" stroke-width="1.35" stroke-linejoin="round" /><polygon points="842.5,834.0 856.3,826.8 856.3,829.8 842.5,837.0" fill="#1f3242" stroke="#0a0a0a" stroke-width="1.35" stroke-linejoin="round" /><polygon points="834.2,823.4 848.0,816.2 856.3,826.8 842.5,834.0" fill="#68cdfd" stroke="#0a0a0a" stroke-width="1.35" stroke-linejoin="round" /><polygon points="836.9,823.7 847.2,818.3 853.6,826.5 843.4,831.9" fill="#1f3242" stroke="#0a0a0a" stroke-width="1.35" stroke-linejoin="round" /><polygon points="843.4,831.9 840.4,828.1 847.2,824.5 850.2,828.3" fill="#dcdfe0" /><polygon points="887.3,795.5 895.6,806.1 895.6,809.1 887.3,798.5" fill="#1f3242" stroke="#0a0a0a" stroke-width="1.35" stroke-linejoin="round" /><polygon points="895.6,806.1 909.4,798.8 909.4,801.8 895.6,809.1" fill="#1f3242" stroke="#0a0a0a" stroke-width="1.35" stroke-linejoin="round" /><polygon points="887.3,795.5 901.1,788.3 909.4,798.8 895.6,806.1" fill="#68cdfd" stroke="#0a0a0a" stroke-width="1.35" stroke-linejoin="round" /><polygon points="890.0,795.8 900.3,790.4 906.7,798.6 896.5,804.0" fill="#1f3242" stroke="#0a0a0a" stroke-width="1.35" stroke-linejoin="round" /><polygon points="896.5,804.0 893.5,800.2 900.3,796.6 903.3,800.4" fill="#dcdfe0" /><polygon points="872.1,808.1 880.5,818.7 880.5,821.7 872.1,811.1" fill="#1f3242" stroke="#0a0a0a" stroke-width="1.35" stroke-linejoin="round" /><polygon points="880.5,818.7 894.3,811.4 894.3,814.4 880.5,821.7" fill="#1f3242" stroke="#0a0a0a" stroke-width="1.35" stroke-linejoin="round" /><polygon points="872.1,808.1 886.0,800.8 894.3,811.4 880.5,818.7" fill="#68cdfd" stroke="#0a0a0a" stroke-width="1.35" stroke-linejoin="round" /><polygon points="874.9,808.3 885.1,802.9 891.6,811.1 881.3,816.5" fill="#1f3242" stroke="#0a0a0a" stroke-width="1.35" stroke-linejoin="round" /><polygon points="881.3,816.5 878.3,812.7 885.1,809.1 888.1,812.9" fill="#dcdfe0" /><polygon points="856.2,819.5 864.5,830.1 864.5,833.1 856.2,822.5" fill="#1f3242" stroke="#0a0a0a" stroke-width="1.35" stroke-linejoin="round" /><polygon points="864.5,830.1 878.3,822.9 878.3,825.9 864.5,833.1" fill="#1f3242" stroke="#0a0a0a" stroke-width="1.35" stroke-linejoin="round" /><polygon points="856.2,819.5 870.0,812.3 878.3,822.9 864.5,830.1" fill="#68cdfd" stroke="#0a0a0a" stroke-width="1.35" stroke-linejoin="round" /><polygon points="858.9,819.8 869.1,814.4 875.6,822.6 865.3,828.0" fill="#1f3242" stroke="#0a0a0a" stroke-width="1.35" stroke-linejoin="round" /><polygon points="865.3,828.0 862.3,824.2 869.1,820.6 872.1,824.4" fill="#dcdfe0" /><polygon points="842.7,834.3 851.0,844.9 851.0,847.9 842.7,837.3" fill="#1f3242" stroke="#0a0a0a" stroke-width="1.35" stroke-linejoin="round" /><polygon points="851.0,844.9 864.8,837.6 864.8,840.6 851.0,847.9" fill="#1f3242" stroke="#0a0a0a" stroke-width="1.35" stroke-linejoin="round" /><polygon points="842.7,834.3 856.5,827.0 864.8,837.6 851.0,844.9" fill="#68cdfd" stroke="#0a0a0a" stroke-width="1.35" stroke-linejoin="round" /><polygon points="845.4,834.5 855.7,829.1 862.1,837.3 851.9,842.7" fill="#1f3242" stroke="#0a0a0a" stroke-width="1.35" stroke-linejoin="round" /><polygon points="851.9,842.7 848.9,838.9 855.7,835.3 858.7,839.2" fill="#dcdfe0" /><polygon points="895.8,806.3 904.1,816.9 904.1,819.9 895.8,809.3" fill="#1f3242" stroke="#0a0a0a" stroke-width="1.35" stroke-linejoin="round" /><polygon points="904.1,816.9 917.9,809.6 917.9,812.6 904.1,819.9" fill="#1f3242" stroke="#0a0a0a" stroke-width="1.35" stroke-linejoin="round" /><polygon points="895.8,806.3 909.6,799.0 917.9,809.6 904.1,816.9" fill="#68cdfd" stroke="#0a0a0a" stroke-width="1.35" stroke-linejoin="round" /><polygon points="898.5,806.6 908.8,801.2 915.2,809.4 905.0,814.8" fill="#1f3242" stroke="#0a0a0a" stroke-width="1.35" stroke-linejoin="round" /><polygon points="905.0,814.8 902.0,811.0 908.8,807.4 911.8,811.2" fill="#dcdfe0" /><polygon points="880.7,818.9 889.0,829.5 889.0,832.5 880.7,821.9" fill="#1f3242" stroke="#0a0a0a" stroke-width="1.35" stroke-linejoin="round" /><polygon points="889.0,829.5 902.8,822.2 902.8,825.2 889.0,832.5" fill="#1f3242" stroke="#0a0a0a" stroke-width="1.35" stroke-linejoin="round" /><polygon points="880.7,818.9 894.5,811.6 902.8,822.2 889.0,829.5" fill="#68cdfd" stroke="#0a0a0a" stroke-width="1.35" stroke-linejoin="round" /><polygon points="883.4,819.1 893.6,813.7 900.1,821.9 889.8,827.3" fill="#1f3242" stroke="#0a0a0a" stroke-width="1.35" stroke-linejoin="round" /><polygon points="889.8,827.3 886.8,823.5 893.6,819.9 896.6,823.7" fill="#dcdfe0" /><polygon points="864.7,830.4 873.0,841.0 873.0,844.0 864.7,833.4" fill="#1f3242" stroke="#0a0a0a" stroke-width="1.35" stroke-linejoin="round" /><polygon points="873.0,841.0 886.8,833.7 886.8,836.7 873.0,844.0" fill="#1f3242" stroke="#0a0a0a" stroke-width="1.35" stroke-linejoin="round" /><polygon points="864.7,830.4 878.5,823.1 886.8,833.7 873.0,841.0" fill="#68cdfd" stroke="#0a0a0a" stroke-width="1.35" stroke-linejoin="round" /><polygon points="867.4,830.6 877.6,825.2 884.1,833.4 873.8,838.8" fill="#1f3242" stroke="#0a0a0a" stroke-width="1.35" stroke-linejoin="round" /><polygon points="873.8,838.8 870.8,835.0 877.6,831.4 880.6,835.2" fill="#dcdfe0" /><polygon points="831.0,851.2 839.3,861.8 839.3,864.8 831.0,854.2" fill="#1f3242" stroke="#0a0a0a" stroke-width="1.35" stroke-linejoin="round" /><polygon points="839.3,861.8 853.1,854.5 853.1,857.5 839.3,864.8" fill="#1f3242" stroke="#0a0a0a" stroke-width="1.35" stroke-linejoin="round" /><polygon points="831.0,851.2 844.8,843.9 853.1,854.5 839.3,861.8" fill="#68cdfd" stroke="#0a0a0a" stroke-width="1.35" stroke-linejoin="round" /><polygon points="833.7,851.4 843.9,846.0 850.4,854.2 840.1,859.6" fill="#1f3242" stroke="#0a0a0a" stroke-width="1.35" stroke-linejoin="round" /><polygon points="840.1,859.6 837.1,855.8 843.9,852.2 846.9,856.1" fill="#dcdfe0" /><polygon points="851.2,845.1 859.5,855.7 859.5,858.7 851.2,848.1" fill="#1f3242" stroke="#0a0a0a" stroke-width="1.35" stroke-linejoin="round" /><polygon points="859.5,855.7 873.3,848.4 873.3,851.4 859.5,858.7" fill="#1f3242" stroke="#0a0a0a" stroke-width="1.35" stroke-linejoin="round" /><polygon points="851.2,845.1 865.0,837.8 873.3,848.4 859.5,855.7" fill="#68cdfd" stroke="#0a0a0a" stroke-width="1.35" stroke-linejoin="round" /><polygon points="853.9,845.3 864.2,839.9 870.6,848.2 860.4,853.6" fill="#1f3242" stroke="#0a0a0a" stroke-width="1.35" stroke-linejoin="round" /><polygon points="860.4,853.6 857.4,849.7 864.2,846.1 867.2,850.0" fill="#dcdfe0" /><polygon points="904.3,817.1 912.7,827.7 912.7,830.7 904.3,820.1" fill="#1f3242" stroke="#0a0a0a" stroke-width="1.35" stroke-linejoin="round" /><polygon points="912.7,827.7 926.5,820.4 926.5,823.4 912.7,830.7" fill="#1f3242" stroke="#0a0a0a" stroke-width="1.35" stroke-linejoin="round" /><polygon points="904.3,817.1 918.1,809.8 926.5,820.4 912.7,827.7" fill="#68cdfd" stroke="#0a0a0a" stroke-width="1.35" stroke-linejoin="round" /><polygon points="907.0,817.4 917.3,812.0 923.8,820.2 913.5,825.6" fill="#1f3242" stroke="#0a0a0a" stroke-width="1.35" stroke-linejoin="round" /><polygon points="913.5,825.6 910.5,821.7 917.3,818.2 920.3,822.0" fill="#dcdfe0" /><polygon points="889.2,829.7 897.5,840.3 897.5,843.3 889.2,832.7" fill="#1f3242" stroke="#0a0a0a" stroke-width="1.35" stroke-linejoin="round" /><polygon points="897.5,840.3 911.3,833.0 911.3,836.0 897.5,843.3" fill="#1f3242" stroke="#0a0a0a" stroke-width="1.35" stroke-linejoin="round" /><polygon points="889.2,829.7 903.0,822.4 911.3,833.0 897.5,840.3" fill="#68cdfd" stroke="#0a0a0a" stroke-width="1.35" stroke-linejoin="round" /><polygon points="891.9,829.9 902.1,824.5 908.6,832.7 898.3,838.1" fill="#1f3242" stroke="#0a0a0a" stroke-width="1.35" stroke-linejoin="round" /><polygon points="898.3,838.1 895.3,834.3 902.1,830.7 905.2,834.5" fill="#dcdfe0" /><polygon points="873.2,841.2 881.5,851.8 881.5,854.8 873.2,844.2" fill="#1f3242" stroke="#0a0a0a" stroke-width="1.35" stroke-linejoin="round" /><polygon points="881.5,851.8 895.3,844.5 895.3,847.5 881.5,854.8" fill="#1f3242" stroke="#0a0a0a" stroke-width="1.35" stroke-linejoin="round" /><polygon points="873.2,841.2 887.0,833.9 895.3,844.5 881.5,851.8" fill="#68cdfd" stroke="#0a0a0a" stroke-width="1.35" stroke-linejoin="round" /><polygon points="875.9,841.4 886.1,836.0 892.6,844.2 882.3,849.6" fill="#1f3242" stroke="#0a0a0a" stroke-width="1.35" stroke-linejoin="round" /><polygon points="882.3,849.6 879.3,845.8 886.1,842.2 889.1,846.0" fill="#dcdfe0" /><polygon points="839.9,862.5 848.2,873.1 848.2,876.1 839.9,865.5" fill="#1f3242" stroke="#0a0a0a" stroke-width="1.35" stroke-linejoin="round" /><polygon points="848.2,873.1 862.0,865.9 862.0,868.9 848.2,876.1" fill="#1f3242" stroke="#0a0a0a" stroke-width="1.35" stroke-linejoin="round" /><polygon points="839.9,862.5 853.7,855.3 862.0,865.9 848.2,873.1" fill="#68cdfd" stroke="#0a0a0a" stroke-width="1.35" stroke-linejoin="round" /><polygon points="842.6,862.8 852.9,857.4 859.3,865.6 849.0,871.0" fill="#1f3242" stroke="#0a0a0a" stroke-width="1.35" stroke-linejoin="round" /><polygon points="849.0,871.0 846.0,867.2 852.9,863.6 855.9,867.4" fill="#dcdfe0" /><polygon points="859.7,855.9 868.0,866.5 868.0,869.5 859.7,858.9" fill="#1f3242" stroke="#0a0a0a" stroke-width="1.35" stroke-linejoin="round" /><polygon points="868.0,866.5 881.8,859.2 881.8,862.2 868.0,869.5" fill="#1f3242" stroke="#0a0a0a" stroke-width="1.35" stroke-linejoin="round" /><polygon points="859.7,855.9 873.5,848.6 881.8,859.2 868.0,866.5" fill="#68cdfd" stroke="#0a0a0a" stroke-width="1.35" stroke-linejoin="round" /><polygon points="862.4,856.2 872.7,850.7 879.1,859.0 868.9,864.4" fill="#1f3242" stroke="#0a0a0a" stroke-width="1.35" stroke-linejoin="round" /><polygon points="868.9,864.4 865.9,860.5 872.7,856.9 875.7,860.8" fill="#dcdfe0" /><polygon points="912.8,827.9 921.2,838.5 921.2,841.5 912.8,830.9" fill="#1f3242" stroke="#0a0a0a" stroke-width="1.35" stroke-linejoin="round" /><polygon points="921.2,838.5 935.0,831.2 935.0,834.2 921.2,841.5" fill="#1f3242" stroke="#0a0a0a" stroke-width="1.35" stroke-linejoin="round" /><polygon points="912.8,827.9 926.6,820.6 935.0,831.2 921.2,838.5" fill="#68cdfd" stroke="#0a0a0a" stroke-width="1.35" stroke-linejoin="round" /><polygon points="915.5,828.2 925.8,822.7 932.3,831.0 922.0,836.4" fill="#1f3242" stroke="#0a0a0a" stroke-width="1.35" stroke-linejoin="round" /><polygon points="922.0,836.4 919.0,832.5 925.8,828.9 928.8,832.8" fill="#dcdfe0" /><polygon points="897.7,840.5 906.0,851.1 906.0,854.1 897.7,843.5" fill="#1f3242" stroke="#0a0a0a" stroke-width="1.35" stroke-linejoin="round" /><polygon points="906.0,851.1 919.8,843.8 919.8,846.8 906.0,854.1" fill="#1f3242" stroke="#0a0a0a" stroke-width="1.35" stroke-linejoin="round" /><polygon points="897.7,840.5 911.5,833.2 919.8,843.8 906.0,851.1" fill="#68cdfd" stroke="#0a0a0a" stroke-width="1.35" stroke-linejoin="round" /><polygon points="900.4,840.7 910.6,835.3 917.1,843.5 906.8,848.9" fill="#1f3242" stroke="#0a0a0a" stroke-width="1.35" stroke-linejoin="round" /><polygon points="906.8,848.9 903.8,845.1 910.6,841.5 913.7,845.3" fill="#dcdfe0" /><polygon points="881.7,852.0 890.0,862.6 890.0,865.6 881.7,855.0" fill="#1f3242" stroke="#0a0a0a" stroke-width="1.35" stroke-linejoin="round" /><polygon points="890.0,862.6 903.8,855.3 903.8,858.3 890.0,865.6" fill="#1f3242" stroke="#0a0a0a" stroke-width="1.35" stroke-linejoin="round" /><polygon points="881.7,852.0 895.5,844.7 903.8,855.3 890.0,862.6" fill="#68cdfd" stroke="#0a0a0a" stroke-width="1.35" stroke-linejoin="round" /><polygon points="884.4,852.2 894.6,846.8 901.1,855.0 890.8,860.5" fill="#1f3242" stroke="#0a0a0a" stroke-width="1.35" stroke-linejoin="round" /><polygon points="890.8,860.5 887.8,856.6 894.6,853.0 897.7,856.9" fill="#dcdfe0" /><polygon points="921.3,838.7 929.7,849.3 929.7,852.3 921.3,841.7" fill="#1f3242" stroke="#0a0a0a" stroke-width="1.35" stroke-linejoin="round" /><polygon points="929.7,849.3 943.5,842.0 943.5,845.0 929.7,852.3" fill="#1f3242" stroke="#0a0a0a" stroke-width="1.35" stroke-linejoin="round" /><polygon points="921.3,838.7 935.1,831.4 943.5,842.0 929.7,849.3" fill="#68cdfd" stroke="#0a0a0a" stroke-width="1.35" stroke-linejoin="round" /><polygon points="924.0,839.0 934.3,833.5 940.8,841.7 930.5,847.2" fill="#1f3242" stroke="#0a0a0a" stroke-width="1.35" stroke-linejoin="round" /><polygon points="930.5,847.2 927.5,843.3 934.3,839.7 937.3,843.6" fill="#dcdfe0" /><polygon points="871.6,871.1 883.3,886.0 883.3,889.0 871.6,874.1" fill="#1f3242" stroke="#0a0a0a" stroke-width="1.35" stroke-linejoin="round" /><polygon points="883.3,886.0 897.2,878.7 897.2,881.7 883.3,889.0" fill="#1f3242" stroke="#0a0a0a" stroke-width="1.35" stroke-linejoin="round" /><polygon points="871.6,871.1 885.4,863.8 897.2,878.7 883.3,886.0" fill="#68cdfd" stroke="#0a0a0a" stroke-width="1.35" stroke-linejoin="round" /><polygon points="874.3,871.3 884.6,865.9 894.4,878.4 884.2,883.9" fill="#1f3242" stroke="#0a0a0a" stroke-width="1.35" stroke-linejoin="round" /><polygon points="884.2,883.9 877.8,875.7 884.6,872.1 891.0,880.3" fill="#dcdfe0" /><polygon points="892.7,866.0 901.1,876.6 901.1,879.6 892.7,869.0" fill="#1f3242" stroke="#0a0a0a" stroke-width="1.35" stroke-linejoin="round" /><polygon points="901.1,876.6 932.6,860.0 932.6,863.0 901.1,879.6" fill="#1f3242" stroke="#0a0a0a" stroke-width="1.35" stroke-linejoin="round" /><polygon points="892.7,866.0 924.2,849.4 932.6,860.0 901.1,876.6" fill="#68cdfd" stroke="#0a0a0a" stroke-width="1.35" stroke-linejoin="round" /><polygon points="895.4,866.3 923.4,851.5 929.9,859.7 901.9,874.5" fill="#1f3242" stroke="#0a0a0a" stroke-width="1.35" stroke-linejoin="round" /><polygon points="901.9,874.5 898.9,870.7 923.4,857.7 926.4,861.6" fill="#dcdfe0" /><polygon points="934.1,854.9 942.4,865.5 942.4,868.5 934.1,857.9" fill="#1f3242" stroke="#0a0a0a" stroke-width="1.35" stroke-linejoin="round" /><polygon points="942.4,865.5 956.3,858.2 956.3,861.2 942.4,868.5" fill="#1f3242" stroke="#0a0a0a" stroke-width="1.35" stroke-linejoin="round" /><polygon points="934.1,854.9 947.9,847.6 956.3,858.2 942.4,865.5" fill="#68cdfd" stroke="#0a0a0a" stroke-width="1.35" stroke-linejoin="round" /><polygon points="936.8,855.2 947.1,849.7 953.5,857.9 943.3,863.4" fill="#1f3242" stroke="#0a0a0a" stroke-width="1.35" stroke-linejoin="round" /><polygon points="943.3,863.4 940.3,859.5 947.1,855.9 950.1,859.8" fill="#dcdfe0" /><polygon points="907.2,884.4 915.5,895.0 915.5,898.0 907.2,887.4" fill="#1f3242" stroke="#0a0a0a" stroke-width="1.35" stroke-linejoin="round" /><polygon points="915.5,895.0 929.3,887.7 929.3,890.7 915.5,898.0" fill="#1f3242" stroke="#0a0a0a" stroke-width="1.35" stroke-linejoin="round" /><polygon points="907.2,884.4 921.0,877.1 929.3,887.7 915.5,895.0" fill="#68cdfd" stroke="#0a0a0a" stroke-width="1.35" stroke-linejoin="round" /><polygon points="909.9,884.7 920.2,879.2 926.6,887.5 916.3,892.9" fill="#1f3242" stroke="#0a0a0a" stroke-width="1.35" stroke-linejoin="round" /><polygon points="916.3,892.9 913.3,889.0 920.2,885.4 923.2,889.3" fill="#dcdfe0" /><polygon points="893.7,899.2 902.0,909.8 902.0,912.8 893.7,902.2" fill="#1f3242" stroke="#0a0a0a" stroke-width="1.35" stroke-linejoin="round" /><polygon points="902.0,909.8 915.9,902.5 915.9,905.5 902.0,912.8" fill="#1f3242" stroke="#0a0a0a" stroke-width="1.35" stroke-linejoin="round" /><polygon points="893.7,899.2 907.5,891.9 915.9,902.5 902.0,909.8" fill="#68cdfd" stroke="#0a0a0a" stroke-width="1.35" stroke-linejoin="round" /><polygon points="896.4,899.4 906.7,894.0 913.2,902.2 902.9,907.7" fill="#1f3242" stroke="#0a0a0a" stroke-width="1.35" stroke-linejoin="round" /><polygon points="902.9,907.7 899.9,903.8 906.7,900.2 909.7,904.0" fill="#dcdfe0" /><polygon points="929.1,880.5 937.5,891.0 937.5,894.0 929.1,883.5" fill="#1f3242" stroke="#0a0a0a" stroke-width="1.35" stroke-linejoin="round" /><polygon points="937.5,891.0 951.3,883.7 951.3,886.7 937.5,894.0" fill="#1f3242" stroke="#0a0a0a" stroke-width="1.35" stroke-linejoin="round" /><polygon points="929.1,880.5 943.0,873.2 951.3,883.7 937.5,891.0" fill="#68cdfd" stroke="#0a0a0a" stroke-width="1.35" stroke-linejoin="round" /><polygon points="931.9,880.7 942.1,875.3 948.6,883.5 938.3,888.9" fill="#1f3242" stroke="#0a0a0a" stroke-width="1.35" stroke-linejoin="round" /><polygon points="938.3,888.9 935.3,885.1 942.1,881.5 945.1,885.3" fill="#dcdfe0" /><polygon points="915.7,895.2 924.0,905.8 924.0,908.8 915.7,898.2" fill="#1f3242" stroke="#0a0a0a" stroke-width="1.35" stroke-linejoin="round" /><polygon points="924.0,905.8 937.8,898.5 937.8,901.5 924.0,908.8" fill="#1f3242" stroke="#0a0a0a" stroke-width="1.35" stroke-linejoin="round" /><polygon points="915.7,895.2 929.5,887.9 937.8,898.5 924.0,905.8" fill="#68cdfd" stroke="#0a0a0a" stroke-width="1.35" stroke-linejoin="round" /><polygon points="918.4,895.5 928.7,890.0 935.1,898.3 924.8,903.7" fill="#1f3242" stroke="#0a0a0a" stroke-width="1.35" stroke-linejoin="round" /><polygon points="924.8,903.7 921.8,899.9 928.7,896.2 931.7,900.1" fill="#dcdfe0" /><polygon points="951.1,876.5 959.5,887.1 959.5,890.1 951.1,879.5" fill="#1f3242" stroke="#0a0a0a" stroke-width="1.35" stroke-linejoin="round" /><polygon points="959.5,887.1 973.3,879.8 973.3,882.8 959.5,890.1" fill="#1f3242" stroke="#0a0a0a" stroke-width="1.35" stroke-linejoin="round" /><polygon points="951.1,876.5 964.9,869.2 973.3,879.8 959.5,887.1" fill="#68cdfd" stroke="#0a0a0a" stroke-width="1.35" stroke-linejoin="round" /><polygon points="953.8,876.7 964.1,871.3 970.6,879.5 960.3,885.0" fill="#1f3242" stroke="#0a0a0a" stroke-width="1.35" stroke-linejoin="round" /><polygon points="960.3,885.0 957.3,881.1 964.1,877.5 967.1,881.3" fill="#dcdfe0" /><ellipse cx="952.2" cy="866.8" rx="2" ry="1.6" fill="#1a2a36"/><polygon points="612.3,792.1 764.9,986.0 764.9,988.2 612.3,794.3" fill="#1f3242" stroke="#0a0a0a" stroke-width="1.00" stroke-linejoin="round" /><polygon points="764.9,986.0 854.7,939.3 854.7,941.5 764.9,988.2" fill="#1f3242" stroke="#0a0a0a" stroke-width="1.00" stroke-linejoin="round" /><polygon points="612.3,792.1 700.9,744.8 854.7,939.3 764.9,986.0" fill="#68cdfd" stroke="#0a0a0a" stroke-width="1.00" stroke-linejoin="round" /><polygon points="669.0,758.4 674.9,765.9 674.9,770.9 669.0,763.4" fill="#1f3242" stroke="#0a0a0a" stroke-width="0.90" stroke-linejoin="round" /><polygon points="674.9,765.9 684.5,760.8 684.5,765.8 674.9,770.9" fill="#1f3242" stroke="#0a0a0a" stroke-width="0.90" stroke-linejoin="round" /><polygon points="669.0,758.4 678.6,753.3 684.5,760.8 674.9,765.9" fill="#68cdfd" stroke="#0a0a0a" stroke-width="0.90" stroke-linejoin="round" /><polygon points="653.3,769.9 659.2,777.4 659.2,782.4 653.3,774.9" fill="#1f3242" stroke="#0a0a0a" stroke-width="0.90" stroke-linejoin="round" /><polygon points="659.2,777.4 668.8,772.3 668.8,777.3 659.2,782.4" fill="#1f3242" stroke="#0a0a0a" stroke-width="0.90" stroke-linejoin="round" /><polygon points="653.3,769.9 662.9,764.8 668.8,772.3 659.2,777.4" fill="#68cdfd" stroke="#0a0a0a" stroke-width="0.90" stroke-linejoin="round" /><polygon points="640.2,784.8 646.1,792.3 646.1,797.3 640.2,789.8" fill="#1f3242" stroke="#0a0a0a" stroke-width="0.90" stroke-linejoin="round" /><polygon points="646.1,792.3 655.7,787.2 655.7,792.2 646.1,797.3" fill="#1f3242" stroke="#0a0a0a" stroke-width="0.90" stroke-linejoin="round" /><polygon points="640.2,784.8 649.8,779.6 655.7,787.2 646.1,792.3" fill="#68cdfd" stroke="#0a0a0a" stroke-width="0.90" stroke-linejoin="round" /><polygon points="692.6,756.8 698.5,764.4 698.5,769.4 692.6,761.8" fill="#1f3242" stroke="#0a0a0a" stroke-width="0.90" stroke-linejoin="round" /><polygon points="698.5,764.4 708.1,759.2 708.1,764.2 698.5,769.4" fill="#1f3242" stroke="#0a0a0a" stroke-width="0.90" stroke-linejoin="round" /><polygon points="692.6,756.8 702.2,751.7 708.1,759.2 698.5,764.4" fill="#68cdfd" stroke="#0a0a0a" stroke-width="0.90" stroke-linejoin="round" /><polygon points="677.7,769.5 683.7,777.0 683.7,782.0 677.7,774.5" fill="#1f3242" stroke="#0a0a0a" stroke-width="0.90" stroke-linejoin="round" /><polygon points="683.7,777.0 693.3,771.9 693.3,776.9 683.7,782.0" fill="#1f3242" stroke="#0a0a0a" stroke-width="0.90" stroke-linejoin="round" /><polygon points="677.7,769.5 687.3,764.3 693.3,771.9 683.7,777.0" fill="#68cdfd" stroke="#0a0a0a" stroke-width="0.90" stroke-linejoin="round" /><polygon points="662.0,781.0 667.9,788.5 667.9,793.5 662.0,786.0" fill="#1f3242" stroke="#0a0a0a" stroke-width="0.90" stroke-linejoin="round" /><polygon points="667.9,788.5 677.5,783.4 677.5,788.4 667.9,793.5" fill="#1f3242" stroke="#0a0a0a" stroke-width="0.90" stroke-linejoin="round" /><polygon points="662.0,781.0 671.6,775.9 677.5,783.4 667.9,788.5" fill="#68cdfd" stroke="#0a0a0a" stroke-width="0.90" stroke-linejoin="round" /><polygon points="648.9,795.8 654.8,803.3 654.8,808.3 648.9,800.8" fill="#1f3242" stroke="#0a0a0a" stroke-width="0.90" stroke-linejoin="round" /><polygon points="654.8,803.3 664.4,798.2 664.4,803.2 654.8,808.3" fill="#1f3242" stroke="#0a0a0a" stroke-width="0.90" stroke-linejoin="round" /><polygon points="648.9,795.8 658.5,790.7 664.4,798.2 654.8,803.3" fill="#68cdfd" stroke="#0a0a0a" stroke-width="0.90" stroke-linejoin="round" /><polygon points="701.3,767.9 707.3,775.4 707.3,780.4 701.3,772.9" fill="#1f3242" stroke="#0a0a0a" stroke-width="0.90" stroke-linejoin="round" /><polygon points="707.3,775.4 716.9,770.3 716.9,775.3 707.3,780.4" fill="#1f3242" stroke="#0a0a0a" stroke-width="0.90" stroke-linejoin="round" /><polygon points="701.3,767.9 710.9,762.8 716.9,770.3 707.3,775.4" fill="#68cdfd" stroke="#0a0a0a" stroke-width="0.90" stroke-linejoin="round" /><polygon points="686.5,780.5 692.4,788.1 692.4,793.1 686.5,785.5" fill="#1f3242" stroke="#0a0a0a" stroke-width="0.90" stroke-linejoin="round" /><polygon points="692.4,788.1 702.0,782.9 702.0,787.9 692.4,793.1" fill="#1f3242" stroke="#0a0a0a" stroke-width="0.90" stroke-linejoin="round" /><polygon points="686.5,780.5 696.1,775.4 702.0,782.9 692.4,788.1" fill="#68cdfd" stroke="#0a0a0a" stroke-width="0.90" stroke-linejoin="round" /><polygon points="670.7,792.1 676.7,799.6 676.7,804.6 670.7,797.1" fill="#1f3242" stroke="#0a0a0a" stroke-width="0.90" stroke-linejoin="round" /><polygon points="676.7,799.6 686.3,794.5 686.3,799.5 676.7,804.6" fill="#1f3242" stroke="#0a0a0a" stroke-width="0.90" stroke-linejoin="round" /><polygon points="670.7,792.1 680.3,786.9 686.3,794.5 676.7,799.6" fill="#68cdfd" stroke="#0a0a0a" stroke-width="0.90" stroke-linejoin="round" /><polygon points="637.9,813.4 643.9,820.9 643.9,825.9 637.9,818.4" fill="#1f3242" stroke="#0a0a0a" stroke-width="0.90" stroke-linejoin="round" /><polygon points="643.9,820.9 653.5,815.8 653.5,820.8 643.9,825.9" fill="#1f3242" stroke="#0a0a0a" stroke-width="0.90" stroke-linejoin="round" /><polygon points="637.9,813.4 647.6,808.3 653.5,815.8 643.9,820.9" fill="#68cdfd" stroke="#0a0a0a" stroke-width="0.90" stroke-linejoin="round" /><polygon points="657.6,806.9 663.5,814.4 663.5,819.4 657.6,811.9" fill="#1f3242" stroke="#0a0a0a" stroke-width="0.90" stroke-linejoin="round" /><polygon points="663.5,814.4 673.2,809.3 673.2,814.3 663.5,819.4" fill="#1f3242" stroke="#0a0a0a" stroke-width="0.90" stroke-linejoin="round" /><polygon points="657.6,806.9 667.2,801.8 673.2,809.3 663.5,814.4" fill="#68cdfd" stroke="#0a0a0a" stroke-width="0.90" stroke-linejoin="round" /><polygon points="710.1,779.0 716.0,786.5 716.0,791.5 710.1,784.0" fill="#1f3242" stroke="#0a0a0a" stroke-width="0.90" stroke-linejoin="round" /><polygon points="716.0,786.5 725.6,781.4 725.6,786.4 716.0,791.5" fill="#1f3242" stroke="#0a0a0a" stroke-width="0.90" stroke-linejoin="round" /><polygon points="710.1,779.0 719.7,773.9 725.6,781.4 716.0,786.5" fill="#68cdfd" stroke="#0a0a0a" stroke-width="0.90" stroke-linejoin="round" /><polygon points="695.2,791.6 701.1,799.1 701.1,804.1 695.2,796.6" fill="#1f3242" stroke="#0a0a0a" stroke-width="0.90" stroke-linejoin="round" /><polygon points="701.1,799.1 710.8,794.0 710.8,799.0 701.1,804.1" fill="#1f3242" stroke="#0a0a0a" stroke-width="0.90" stroke-linejoin="round" /><polygon points="695.2,791.6 704.8,786.5 710.8,794.0 701.1,799.1" fill="#68cdfd" stroke="#0a0a0a" stroke-width="0.90" stroke-linejoin="round" /><polygon points="679.5,803.1 685.4,810.6 685.4,815.6 679.5,808.1" fill="#1f3242" stroke="#0a0a0a" stroke-width="0.90" stroke-linejoin="round" /><polygon points="685.4,810.6 695.0,805.5 695.0,810.5 685.4,815.6" fill="#1f3242" stroke="#0a0a0a" stroke-width="0.90" stroke-linejoin="round" /><polygon points="679.5,803.1 689.1,798.0 695.0,805.5 685.4,810.6" fill="#68cdfd" stroke="#0a0a0a" stroke-width="0.90" stroke-linejoin="round" /><polygon points="647.1,825.0 653.0,832.5 653.0,837.5 647.1,830.0" fill="#1f3242" stroke="#0a0a0a" stroke-width="0.90" stroke-linejoin="round" /><polygon points="653.0,832.5 662.6,827.4 662.6,832.4 653.0,837.5" fill="#1f3242" stroke="#0a0a0a" stroke-width="0.90" stroke-linejoin="round" /><polygon points="647.1,825.0 656.7,819.9 662.6,827.4 653.0,832.5" fill="#68cdfd" stroke="#0a0a0a" stroke-width="0.90" stroke-linejoin="round" /><polygon points="666.3,817.9 672.2,825.5 672.2,830.5 666.3,822.9" fill="#1f3242" stroke="#0a0a0a" stroke-width="0.90" stroke-linejoin="round" /><polygon points="672.2,825.5 681.9,820.4 681.9,825.4 672.2,830.5" fill="#1f3242" stroke="#0a0a0a" stroke-width="0.90" stroke-linejoin="round" /><polygon points="666.3,817.9 675.9,812.8 681.9,820.4 672.2,825.5" fill="#68cdfd" stroke="#0a0a0a" stroke-width="0.90" stroke-linejoin="round" /><polygon points="718.8,790.1 724.8,797.6 724.8,802.6 718.8,795.1" fill="#1f3242" stroke="#0a0a0a" stroke-width="0.90" stroke-linejoin="round" /><polygon points="724.8,797.6 734.4,792.5 734.4,797.5 724.8,802.6" fill="#1f3242" stroke="#0a0a0a" stroke-width="0.90" stroke-linejoin="round" /><polygon points="718.8,790.1 728.5,785.0 734.4,792.5 724.8,797.6" fill="#68cdfd" stroke="#0a0a0a" stroke-width="0.90" stroke-linejoin="round" /><polygon points="703.9,802.7 709.9,810.2 709.9,815.2 703.9,807.7" fill="#1f3242" stroke="#0a0a0a" stroke-width="0.90" stroke-linejoin="round" /><polygon points="709.9,810.2 719.5,805.1 719.5,810.1 709.9,815.2" fill="#1f3242" stroke="#0a0a0a" stroke-width="0.90" stroke-linejoin="round" /><polygon points="703.9,802.7 713.6,797.6 719.5,805.1 709.9,810.2" fill="#68cdfd" stroke="#0a0a0a" stroke-width="0.90" stroke-linejoin="round" /><polygon points="688.2,814.2 694.1,821.7 694.1,826.7 688.2,819.2" fill="#1f3242" stroke="#0a0a0a" stroke-width="0.90" stroke-linejoin="round" /><polygon points="694.1,821.7 703.8,816.6 703.8,821.6 694.1,826.7" fill="#1f3242" stroke="#0a0a0a" stroke-width="0.90" stroke-linejoin="round" /><polygon points="688.2,814.2 697.8,809.1 703.8,816.6 694.1,821.7" fill="#68cdfd" stroke="#0a0a0a" stroke-width="0.90" stroke-linejoin="round" /><polygon points="675.0,829.0 681.0,836.5 681.0,841.5 675.0,834.0" fill="#1f3242" stroke="#0a0a0a" stroke-width="0.90" stroke-linejoin="round" /><polygon points="681.0,836.5 690.6,831.4 690.6,836.4 681.0,841.5" fill="#1f3242" stroke="#0a0a0a" stroke-width="0.90" stroke-linejoin="round" /><polygon points="675.0,829.0 684.7,823.9 690.6,831.4 681.0,836.5" fill="#68cdfd" stroke="#0a0a0a" stroke-width="0.90" stroke-linejoin="round" /><polygon points="727.6,801.1 733.5,808.7 733.5,813.7 727.6,806.1" fill="#1f3242" stroke="#0a0a0a" stroke-width="0.90" stroke-linejoin="round" /><polygon points="733.5,808.7 743.2,803.6 743.2,808.6 733.5,813.7" fill="#1f3242" stroke="#0a0a0a" stroke-width="0.90" stroke-linejoin="round" /><polygon points="727.6,801.1 737.2,796.0 743.2,803.6 733.5,808.7" fill="#68cdfd" stroke="#0a0a0a" stroke-width="0.90" stroke-linejoin="round" /><polygon points="712.7,813.8 718.6,821.3 718.6,826.3 712.7,818.8" fill="#1f3242" stroke="#0a0a0a" stroke-width="0.90" stroke-linejoin="round" /><polygon points="718.6,821.3 728.3,816.2 728.3,821.2 718.6,826.3" fill="#1f3242" stroke="#0a0a0a" stroke-width="0.90" stroke-linejoin="round" /><polygon points="712.7,813.8 722.3,808.7 728.3,816.2 718.6,821.3" fill="#68cdfd" stroke="#0a0a0a" stroke-width="0.90" stroke-linejoin="round" /><polygon points="696.9,825.3 702.9,832.8 702.9,837.8 696.9,830.3" fill="#1f3242" stroke="#0a0a0a" stroke-width="0.90" stroke-linejoin="round" /><polygon points="702.9,832.8 712.5,827.7 712.5,832.7 702.9,837.8" fill="#1f3242" stroke="#0a0a0a" stroke-width="0.90" stroke-linejoin="round" /><polygon points="696.9,825.3 706.6,820.1 712.5,827.7 702.9,832.8" fill="#68cdfd" stroke="#0a0a0a" stroke-width="0.90" stroke-linejoin="round" /><polygon points="683.7,840.1 689.7,847.6 689.7,852.6 683.7,845.1" fill="#1f3242" stroke="#0a0a0a" stroke-width="0.90" stroke-linejoin="round" /><polygon points="689.7,847.6 699.3,842.5 699.3,847.5 689.7,852.6" fill="#1f3242" stroke="#0a0a0a" stroke-width="0.90" stroke-linejoin="round" /><polygon points="683.7,840.1 693.4,835.0 699.3,842.5 689.7,847.6" fill="#68cdfd" stroke="#0a0a0a" stroke-width="0.90" stroke-linejoin="round" /><polygon points="736.3,812.2 742.3,819.8 742.3,824.8 736.3,817.2" fill="#1f3242" stroke="#0a0a0a" stroke-width="0.90" stroke-linejoin="round" /><polygon points="742.3,819.8 751.9,814.7 751.9,819.7 742.3,824.8" fill="#1f3242" stroke="#0a0a0a" stroke-width="0.90" stroke-linejoin="round" /><polygon points="736.3,812.2 746.0,807.1 751.9,814.7 742.3,819.8" fill="#68cdfd" stroke="#0a0a0a" stroke-width="0.90" stroke-linejoin="round" /><polygon points="721.4,824.8 727.4,832.4 727.4,837.4 721.4,829.8" fill="#1f3242" stroke="#0a0a0a" stroke-width="0.90" stroke-linejoin="round" /><polygon points="727.4,832.4 737.0,827.3 737.0,832.3 727.4,837.4" fill="#1f3242" stroke="#0a0a0a" stroke-width="0.90" stroke-linejoin="round" /><polygon points="721.4,824.8 731.1,819.7 737.0,827.3 727.4,832.4" fill="#68cdfd" stroke="#0a0a0a" stroke-width="0.90" stroke-linejoin="round" /><polygon points="705.6,836.3 711.6,843.8 711.6,848.8 705.6,841.3" fill="#1f3242" stroke="#0a0a0a" stroke-width="0.90" stroke-linejoin="round" /><polygon points="711.6,843.8 721.2,838.7 721.2,843.7 711.6,848.8" fill="#1f3242" stroke="#0a0a0a" stroke-width="0.90" stroke-linejoin="round" /><polygon points="705.6,836.3 715.3,831.2 721.2,838.7 711.6,843.8" fill="#68cdfd" stroke="#0a0a0a" stroke-width="0.90" stroke-linejoin="round" /><polygon points="656.6,837.2 698.2,890.0 698.2,895.0 656.6,842.2" fill="#1f3242" stroke="#0a0a0a" stroke-width="0.90" stroke-linejoin="round" /><polygon points="698.2,890.0 707.9,884.9 707.9,889.9 698.2,895.0" fill="#1f3242" stroke="#0a0a0a" stroke-width="0.90" stroke-linejoin="round" /><polygon points="656.6,837.2 666.3,832.1 707.9,884.9 698.2,890.0" fill="#68cdfd" stroke="#0a0a0a" stroke-width="0.90" stroke-linejoin="round" /><polygon points="692.5,851.1 698.4,858.7 698.4,863.7 692.5,856.1" fill="#1f3242" stroke="#0a0a0a" stroke-width="0.90" stroke-linejoin="round" /><polygon points="698.4,858.7 708.0,853.6 708.0,858.6 698.4,863.7" fill="#1f3242" stroke="#0a0a0a" stroke-width="0.90" stroke-linejoin="round" /><polygon points="692.5,851.1 702.1,846.0 708.0,853.6 698.4,858.7" fill="#68cdfd" stroke="#0a0a0a" stroke-width="0.90" stroke-linejoin="round" /><polygon points="745.1,823.3 751.0,830.8 751.0,835.8 745.1,828.3" fill="#1f3242" stroke="#0a0a0a" stroke-width="0.90" stroke-linejoin="round" /><polygon points="751.0,830.8 760.7,825.7 760.7,830.7 751.0,835.8" fill="#1f3242" stroke="#0a0a0a" stroke-width="0.90" stroke-linejoin="round" /><polygon points="745.1,823.3 754.7,818.2 760.7,825.7 751.0,830.8" fill="#68cdfd" stroke="#0a0a0a" stroke-width="0.90" stroke-linejoin="round" /><polygon points="730.2,835.9 736.1,843.4 736.1,848.4 730.2,840.9" fill="#1f3242" stroke="#0a0a0a" stroke-width="0.90" stroke-linejoin="round" /><polygon points="736.1,843.4 745.8,838.3 745.8,843.3 736.1,848.4" fill="#1f3242" stroke="#0a0a0a" stroke-width="0.90" stroke-linejoin="round" /><polygon points="730.2,835.9 739.8,830.8 745.8,838.3 736.1,843.4" fill="#68cdfd" stroke="#0a0a0a" stroke-width="0.90" stroke-linejoin="round" /><polygon points="714.4,847.4 720.3,854.9 720.3,859.9 714.4,852.4" fill="#1f3242" stroke="#0a0a0a" stroke-width="0.90" stroke-linejoin="round" /><polygon points="720.3,854.9 730.0,849.8 730.0,854.8 720.3,859.9" fill="#1f3242" stroke="#0a0a0a" stroke-width="0.90" stroke-linejoin="round" /><polygon points="714.4,847.4 724.0,842.3 730.0,849.8 720.3,854.9" fill="#68cdfd" stroke="#0a0a0a" stroke-width="0.90" stroke-linejoin="round" /><polygon points="701.2,862.2 707.1,869.7 707.1,874.7 701.2,867.2" fill="#1f3242" stroke="#0a0a0a" stroke-width="0.90" stroke-linejoin="round" /><polygon points="707.1,869.7 716.8,864.6 716.8,869.6 707.1,874.7" fill="#1f3242" stroke="#0a0a0a" stroke-width="0.90" stroke-linejoin="round" /><polygon points="701.2,862.2 710.8,857.1 716.8,864.6 707.1,869.7" fill="#68cdfd" stroke="#0a0a0a" stroke-width="0.90" stroke-linejoin="round" /><polygon points="753.9,834.4 759.8,841.9 759.8,846.9 753.9,839.4" fill="#1f3242" stroke="#0a0a0a" stroke-width="0.90" stroke-linejoin="round" /><polygon points="759.8,841.9 769.5,836.8 769.5,841.8 759.8,846.9" fill="#1f3242" stroke="#0a0a0a" stroke-width="0.90" stroke-linejoin="round" /><polygon points="753.9,834.4 763.5,829.3 769.5,836.8 759.8,841.9" fill="#68cdfd" stroke="#0a0a0a" stroke-width="0.90" stroke-linejoin="round" /><polygon points="738.9,847.0 744.9,854.5 744.9,859.5 738.9,852.0" fill="#1f3242" stroke="#0a0a0a" stroke-width="0.90" stroke-linejoin="round" /><polygon points="744.9,854.5 754.5,849.4 754.5,854.4 744.9,859.5" fill="#1f3242" stroke="#0a0a0a" stroke-width="0.90" stroke-linejoin="round" /><polygon points="738.9,847.0 748.6,841.9 754.5,849.4 744.9,854.5" fill="#68cdfd" stroke="#0a0a0a" stroke-width="0.90" stroke-linejoin="round" /><polygon points="723.1,858.5 729.0,866.0 729.0,871.0 723.1,863.5" fill="#1f3242" stroke="#0a0a0a" stroke-width="0.90" stroke-linejoin="round" /><polygon points="729.0,866.0 738.7,860.9 738.7,865.9 729.0,871.0" fill="#1f3242" stroke="#0a0a0a" stroke-width="0.90" stroke-linejoin="round" /><polygon points="723.1,858.5 732.8,853.4 738.7,860.9 729.0,866.0" fill="#68cdfd" stroke="#0a0a0a" stroke-width="0.90" stroke-linejoin="round" /><polygon points="709.9,873.3 715.8,880.8 715.8,885.8 709.9,878.3" fill="#1f3242" stroke="#0a0a0a" stroke-width="0.90" stroke-linejoin="round" /><polygon points="715.8,880.8 725.5,875.7 725.5,880.7 715.8,885.8" fill="#1f3242" stroke="#0a0a0a" stroke-width="0.90" stroke-linejoin="round" /><polygon points="709.9,873.3 719.6,868.2 725.5,875.7 715.8,880.8" fill="#68cdfd" stroke="#0a0a0a" stroke-width="0.90" stroke-linejoin="round" /><polygon points="762.6,845.5 768.6,853.0 768.6,858.0 762.6,850.5" fill="#1f3242" stroke="#0a0a0a" stroke-width="0.90" stroke-linejoin="round" /><polygon points="768.6,853.0 778.2,847.9 778.2,852.9 768.6,858.0" fill="#1f3242" stroke="#0a0a0a" stroke-width="0.90" stroke-linejoin="round" /><polygon points="762.6,845.5 772.3,840.4 778.2,847.9 768.6,853.0" fill="#68cdfd" stroke="#0a0a0a" stroke-width="0.90" stroke-linejoin="round" /><polygon points="747.7,858.1 753.6,865.6 753.6,870.6 747.7,863.1" fill="#1f3242" stroke="#0a0a0a" stroke-width="0.90" stroke-linejoin="round" /><polygon points="753.6,865.6 763.3,860.5 763.3,865.5 753.6,870.6" fill="#1f3242" stroke="#0a0a0a" stroke-width="0.90" stroke-linejoin="round" /><polygon points="747.7,858.1 757.3,853.0 763.3,860.5 753.6,865.6" fill="#68cdfd" stroke="#0a0a0a" stroke-width="0.90" stroke-linejoin="round" /><polygon points="731.8,869.5 737.8,877.1 737.8,882.1 731.8,874.5" fill="#1f3242" stroke="#0a0a0a" stroke-width="0.90" stroke-linejoin="round" /><polygon points="737.8,877.1 747.4,872.0 747.4,877.0 737.8,882.1" fill="#1f3242" stroke="#0a0a0a" stroke-width="0.90" stroke-linejoin="round" /><polygon points="731.8,869.5 741.5,864.4 747.4,872.0 737.8,877.1" fill="#68cdfd" stroke="#0a0a0a" stroke-width="0.90" stroke-linejoin="round" /><polygon points="718.6,884.3 724.5,891.8 724.5,896.8 718.6,889.3" fill="#1f3242" stroke="#0a0a0a" stroke-width="0.90" stroke-linejoin="round" /><polygon points="724.5,891.8 734.2,886.7 734.2,891.7 724.5,896.8" fill="#1f3242" stroke="#0a0a0a" stroke-width="0.90" stroke-linejoin="round" /><polygon points="718.6,884.3 728.3,879.2 734.2,886.7 724.5,891.8" fill="#68cdfd" stroke="#0a0a0a" stroke-width="0.90" stroke-linejoin="round" /><polygon points="771.4,856.6 777.3,864.1 777.3,869.1 771.4,861.6" fill="#1f3242" stroke="#0a0a0a" stroke-width="0.90" stroke-linejoin="round" /><polygon points="777.3,864.1 787.0,859.0 787.0,864.0 777.3,869.1" fill="#1f3242" stroke="#0a0a0a" stroke-width="0.90" stroke-linejoin="round" /><polygon points="771.4,856.6 781.0,851.5 787.0,859.0 777.3,864.1" fill="#68cdfd" stroke="#0a0a0a" stroke-width="0.90" stroke-linejoin="round" /><polygon points="756.4,869.1 762.3,876.7 762.3,881.7 756.4,874.1" fill="#1f3242" stroke="#0a0a0a" stroke-width="0.90" stroke-linejoin="round" /><polygon points="762.3,876.7 772.0,871.6 772.0,876.6 762.3,881.7" fill="#1f3242" stroke="#0a0a0a" stroke-width="0.90" stroke-linejoin="round" /><polygon points="756.4,869.1 766.1,864.0 772.0,871.6 762.3,876.7" fill="#68cdfd" stroke="#0a0a0a" stroke-width="0.90" stroke-linejoin="round" /><polygon points="740.6,880.6 746.5,888.1 746.5,893.1 740.6,885.6" fill="#1f3242" stroke="#0a0a0a" stroke-width="0.90" stroke-linejoin="round" /><polygon points="746.5,888.1 756.2,883.0 756.2,888.0 746.5,893.1" fill="#1f3242" stroke="#0a0a0a" stroke-width="0.90" stroke-linejoin="round" /><polygon points="740.6,880.6 750.2,875.5 756.2,883.0 746.5,888.1" fill="#68cdfd" stroke="#0a0a0a" stroke-width="0.90" stroke-linejoin="round" /><polygon points="707.1,901.3 713.0,908.8 713.0,913.8 707.1,906.3" fill="#1f3242" stroke="#0a0a0a" stroke-width="0.90" stroke-linejoin="round" /><polygon points="713.0,908.8 722.7,903.7 722.7,908.7 713.0,913.8" fill="#1f3242" stroke="#0a0a0a" stroke-width="0.90" stroke-linejoin="round" /><polygon points="707.1,901.3 716.8,896.2 722.7,903.7 713.0,908.8" fill="#68cdfd" stroke="#0a0a0a" stroke-width="0.90" stroke-linejoin="round" /><polygon points="727.3,895.4 733.3,902.9 733.3,907.9 727.3,900.4" fill="#1f3242" stroke="#0a0a0a" stroke-width="0.90" stroke-linejoin="round" /><polygon points="733.3,902.9 742.9,897.8 742.9,902.8 733.3,907.9" fill="#1f3242" stroke="#0a0a0a" stroke-width="0.90" stroke-linejoin="round" /><polygon points="727.3,895.4 737.0,890.3 742.9,897.8 733.3,902.9" fill="#68cdfd" stroke="#0a0a0a" stroke-width="0.90" stroke-linejoin="round" /><polygon points="780.1,867.6 786.1,875.2 786.1,880.2 780.1,872.6" fill="#1f3242" stroke="#0a0a0a" stroke-width="0.90" stroke-linejoin="round" /><polygon points="786.1,875.2 795.8,870.1 795.8,875.1 786.1,880.2" fill="#1f3242" stroke="#0a0a0a" stroke-width="0.90" stroke-linejoin="round" /><polygon points="780.1,867.6 789.8,862.5 795.8,870.1 786.1,875.2" fill="#68cdfd" stroke="#0a0a0a" stroke-width="0.90" stroke-linejoin="round" /><polygon points="765.1,880.2 771.1,887.7 771.1,892.7 765.1,885.2" fill="#1f3242" stroke="#0a0a0a" stroke-width="0.90" stroke-linejoin="round" /><polygon points="771.1,887.7 780.8,882.7 780.8,887.7 771.1,892.7" fill="#1f3242" stroke="#0a0a0a" stroke-width="0.90" stroke-linejoin="round" /><polygon points="765.1,880.2 774.8,875.1 780.8,882.7 771.1,887.7" fill="#68cdfd" stroke="#0a0a0a" stroke-width="0.90" stroke-linejoin="round" /><polygon points="749.3,891.7 755.2,899.2 755.2,904.2 749.3,896.7" fill="#1f3242" stroke="#0a0a0a" stroke-width="0.90" stroke-linejoin="round" /><polygon points="755.2,899.2 764.9,894.1 764.9,899.1 755.2,904.2" fill="#1f3242" stroke="#0a0a0a" stroke-width="0.90" stroke-linejoin="round" /><polygon points="749.3,891.7 759.0,886.6 764.9,894.1 755.2,899.2" fill="#68cdfd" stroke="#0a0a0a" stroke-width="0.90" stroke-linejoin="round" /><polygon points="716.3,912.9 722.2,920.4 722.2,925.4 716.3,917.9" fill="#1f3242" stroke="#0a0a0a" stroke-width="0.90" stroke-linejoin="round" /><polygon points="722.2,920.4 731.9,915.3 731.9,920.3 722.2,925.4" fill="#1f3242" stroke="#0a0a0a" stroke-width="0.90" stroke-linejoin="round" /><polygon points="716.3,912.9 725.9,907.8 731.9,915.3 722.2,920.4" fill="#68cdfd" stroke="#0a0a0a" stroke-width="0.90" stroke-linejoin="round" /><polygon points="736.0,906.4 742.0,914.0 742.0,919.0 736.0,911.4" fill="#1f3242" stroke="#0a0a0a" stroke-width="0.90" stroke-linejoin="round" /><polygon points="742.0,914.0 751.7,908.9 751.7,913.9 742.0,919.0" fill="#1f3242" stroke="#0a0a0a" stroke-width="0.90" stroke-linejoin="round" /><polygon points="736.0,906.4 745.7,901.4 751.7,908.9 742.0,914.0" fill="#68cdfd" stroke="#0a0a0a" stroke-width="0.90" stroke-linejoin="round" /><polygon points="788.9,878.7 794.8,886.3 794.8,891.3 788.9,883.7" fill="#1f3242" stroke="#0a0a0a" stroke-width="0.90" stroke-linejoin="round" /><polygon points="794.8,886.3 804.5,881.2 804.5,886.2 794.8,891.3" fill="#1f3242" stroke="#0a0a0a" stroke-width="0.90" stroke-linejoin="round" /><polygon points="788.9,878.7 798.6,873.6 804.5,881.2 794.8,886.3" fill="#68cdfd" stroke="#0a0a0a" stroke-width="0.90" stroke-linejoin="round" /><polygon points="773.9,891.3 779.8,898.8 779.8,903.8 773.9,896.3" fill="#1f3242" stroke="#0a0a0a" stroke-width="0.90" stroke-linejoin="round" /><polygon points="779.8,898.8 789.5,893.7 789.5,898.7 779.8,903.8" fill="#1f3242" stroke="#0a0a0a" stroke-width="0.90" stroke-linejoin="round" /><polygon points="773.9,891.3 783.6,886.2 789.5,893.7 779.8,898.8" fill="#68cdfd" stroke="#0a0a0a" stroke-width="0.90" stroke-linejoin="round" /><polygon points="758.0,902.7 764.0,910.3 764.0,915.3 758.0,907.7" fill="#1f3242" stroke="#0a0a0a" stroke-width="0.90" stroke-linejoin="round" /><polygon points="764.0,910.3 773.6,905.2 773.6,910.2 764.0,915.3" fill="#1f3242" stroke="#0a0a0a" stroke-width="0.90" stroke-linejoin="round" /><polygon points="758.0,902.7 767.7,897.6 773.6,905.2 764.0,910.3" fill="#68cdfd" stroke="#0a0a0a" stroke-width="0.90" stroke-linejoin="round" /><polygon points="797.6,889.8 803.6,897.3 803.6,902.3 797.6,894.8" fill="#1f3242" stroke="#0a0a0a" stroke-width="0.90" stroke-linejoin="round" /><polygon points="803.6,897.3 813.3,892.3 813.3,897.3 803.6,902.3" fill="#1f3242" stroke="#0a0a0a" stroke-width="0.90" stroke-linejoin="round" /><polygon points="797.6,889.8 807.3,884.7 813.3,892.3 803.6,897.3" fill="#68cdfd" stroke="#0a0a0a" stroke-width="0.90" stroke-linejoin="round" /><polygon points="748.2,921.9 757.7,933.9 757.7,938.9 748.2,926.9" fill="#1f3242" stroke="#0a0a0a" stroke-width="0.90" stroke-linejoin="round" /><polygon points="757.7,933.9 767.4,928.8 767.4,933.8 757.7,938.9" fill="#1f3242" stroke="#0a0a0a" stroke-width="0.90" stroke-linejoin="round" /><polygon points="748.2,921.9 757.9,916.8 767.4,928.8 757.7,933.9" fill="#68cdfd" stroke="#0a0a0a" stroke-width="0.90" stroke-linejoin="round" /><polygon points="769.4,917.1 775.3,924.6 775.3,929.6 769.4,922.1" fill="#1f3242" stroke="#0a0a0a" stroke-width="0.90" stroke-linejoin="round" /><polygon points="775.3,924.6 802.7,910.3 802.7,915.3 775.3,929.6" fill="#1f3242" stroke="#0a0a0a" stroke-width="0.90" stroke-linejoin="round" /><polygon points="769.4,917.1 796.7,902.8 802.7,910.3 775.3,924.6" fill="#68cdfd" stroke="#0a0a0a" stroke-width="0.90" stroke-linejoin="round" /><polygon points="810.8,906.4 816.7,914.0 816.7,919.0 810.8,911.4" fill="#1f3242" stroke="#0a0a0a" stroke-width="0.90" stroke-linejoin="round" /><polygon points="816.7,914.0 826.4,908.9 826.4,913.9 816.7,919.0" fill="#1f3242" stroke="#0a0a0a" stroke-width="0.90" stroke-linejoin="round" /><polygon points="810.8,906.4 820.5,901.3 826.4,908.9 816.7,914.0" fill="#68cdfd" stroke="#0a0a0a" stroke-width="0.90" stroke-linejoin="round" /><polygon points="784.2,935.9 790.1,943.5 790.1,948.5 784.2,940.9" fill="#1f3242" stroke="#0a0a0a" stroke-width="0.90" stroke-linejoin="round" /><polygon points="790.1,943.5 799.9,938.4 799.9,943.4 790.1,948.5" fill="#1f3242" stroke="#0a0a0a" stroke-width="0.90" stroke-linejoin="round" /><polygon points="784.2,935.9 793.9,930.9 799.9,938.4 790.1,943.5" fill="#68cdfd" stroke="#0a0a0a" stroke-width="0.90" stroke-linejoin="round" /><polygon points="770.9,950.7 776.8,958.2 776.8,963.2 770.9,955.7" fill="#1f3242" stroke="#0a0a0a" stroke-width="0.90" stroke-linejoin="round" /><polygon points="776.8,958.2 786.6,953.1 786.6,958.1 776.8,963.2" fill="#1f3242" stroke="#0a0a0a" stroke-width="0.90" stroke-linejoin="round" /><polygon points="770.9,950.7 780.6,945.6 786.6,953.1 776.8,958.2" fill="#68cdfd" stroke="#0a0a0a" stroke-width="0.90" stroke-linejoin="round" /><polygon points="806.2,932.3 812.2,939.8 812.2,944.8 806.2,937.3" fill="#1f3242" stroke="#0a0a0a" stroke-width="0.90" stroke-linejoin="round" /><polygon points="812.2,939.8 821.9,934.7 821.9,939.7 812.2,944.8" fill="#1f3242" stroke="#0a0a0a" stroke-width="0.90" stroke-linejoin="round" /><polygon points="806.2,932.3 816.0,927.2 821.9,934.7 812.2,939.8" fill="#68cdfd" stroke="#0a0a0a" stroke-width="0.90" stroke-linejoin="round" /><polygon points="792.9,947.0 798.9,954.5 798.9,959.5 792.9,952.0" fill="#1f3242" stroke="#0a0a0a" stroke-width="0.90" stroke-linejoin="round" /><polygon points="798.9,954.5 808.6,949.5 808.6,954.5 798.9,959.5" fill="#1f3242" stroke="#0a0a0a" stroke-width="0.90" stroke-linejoin="round" /><polygon points="792.9,947.0 802.7,941.9 808.6,949.5 798.9,954.5" fill="#68cdfd" stroke="#0a0a0a" stroke-width="0.90" stroke-linejoin="round" /><polygon points="828.3,928.6 834.2,936.1 834.2,941.1 828.3,933.6" fill="#1f3242" stroke="#0a0a0a" stroke-width="0.90" stroke-linejoin="round" /><polygon points="834.2,936.1 844.0,931.1 844.0,936.1 834.2,941.1" fill="#1f3242" stroke="#0a0a0a" stroke-width="0.90" stroke-linejoin="round" /><polygon points="828.3,928.6 838.0,923.5 844.0,931.1 834.2,936.1" fill="#68cdfd" stroke="#0a0a0a" stroke-width="0.90" stroke-linejoin="round" /><circle cx="827.4" cy="920.7" r="2.2" fill="none" stroke="#1a2a36" stroke-width="1"/><defs><linearGradient id="vcl" x1="0" y1="0" x2="0" y2="1"><stop offset="0" stop-color="#f4f4f4"/><stop offset="1" stop-color="#d9d9d9"/></linearGradient><radialGradient id="vcs" cx="0.5" cy="0.5" r="0.5"><stop offset="0" stop-color="#000" stop-opacity="0.18"/><stop offset="1" stop-color="#000" stop-opacity="0"/></radialGradient></defs><ellipse cx="1858" cy="178" rx="40" ry="18" fill="url(#vcs)"/><polygon points="1824.4,120.3 1847.3,151.7 1848.3,185 1826.9,160.6" fill="url(#vcl)" stroke="#bdbdbd" stroke-width="0.8" stroke-dasharray="2,1.5"/><polygon points="1847.3,151.7 1893.5,133.8 1889.5,163.6 1848.3,185" fill="url(#vcl)" stroke="#bdbdbd" stroke-width="0.8" stroke-dasharray="2,1.5"/><polygon points="1824.4,120.3 1866.2,106.4 1893.5,133.8 1847.3,151.7" fill="#f0f0f0" stroke="#bdbdbd" stroke-width="0.8" stroke-dasharray="2,1.5"/><polygon points="1843,146 1847.3,151.7 1847.5,159 1843,154" fill="#a8ddf0"/><polygon points="1843,146 1852,143 1856,149 1847.3,151.7" fill="#b5e3f3"/><polygon points="1847.3,151.7 1856,149 1856.5,157 1847.5,159" fill="#aadff2"/><text x="0" y="0" font-size="9.5" font-weight="bold" fill="#1a1a1a" transform="translate(1848,135) rotate(-24)" style="font-family:'Liberation Sans',sans-serif">TOP</text><text x="0" y="0" font-size="9.5" font-weight="bold" font-style="italic" fill="#1a1a1a" transform="translate(1855,172) rotate(-22) skewX(-8)" style="font-family:'Liberation Sans',sans-serif">FRONT</text><text x="0" y="0" font-size="5" font-weight="bold" fill="#333" transform="translate(1832,146) rotate(50)" style="font-family:'Liberation Sans',sans-serif">LEFT</text><rect x="1852.5" y="219.5" width="37" height="308" fill="#efefef" stroke="#c4c4c4" stroke-width="1.5"/><path d="M1871,232 V250 M1862,241 H1880" stroke="#222" stroke-width="1.3"/><path d="M1871,230 l-2.5,3 h5z M1871,252 l-2.5,-3 h5z M1860,241 l3,-2.5 v5z M1882,241 l-3,-2.5 v5z" fill="#222"/><g transform="translate(1864.5,268.0) scale(0.620)"><g stroke="#1e1e1e" stroke-width="0.7" stroke-linejoin="round"><polygon points="12,3 21,7.5 12,12 3,7.5" fill="#fff"/><polygon points="3,7.5 12,12 12,22 3,17.5" fill="#6e6e6e"/><polygon points="12,12 21,7.5 21,17.5 12,22" fill="#2a2a2a"/></g></g><path d="M1872,266 Q1881,268 1880,279 M1862,276 Q1861,285 1870,287" fill="none" stroke="#222" stroke-width="1"/><path d="M1871,264 l3,3 l-4,1z M1871,287 l-3,-2 l3,-2z" fill="#222"/><circle cx="1869" cy="309" r="6.5" fill="#fff" stroke="#222" stroke-width="1.3"/><path d="M1873.5,313.5 L1878,318" stroke="#222" stroke-width="3.2"/><line x1="1857" y1="332" x2="1883" y2="332" stroke="#9a9a9a" stroke-width="1"/><line x1="1857" y1="481" x2="1883" y2="481" stroke="#9a9a9a" stroke-width="1"/><path d="M1861,350 v-4 h4 M1877,346 h4 v4 M1881,361 v4 h-4 M1865,365 h-4 v-4" fill="none" stroke="#222" stroke-width="1.1"/><g transform="translate(1864.5,348.0) scale(0.600)"><g stroke="#1e1e1e" stroke-width="0.7" stroke-linejoin="round"><polygon points="12,3 21,7.5 12,12 3,7.5" fill="#fff"/><polygon points="3,7.5 12,12 12,22 3,17.5" fill="#6e6e6e"/><polygon points="12,12 21,7.5 21,17.5 12,22" fill="#2a2a2a"/></g></g><circle cx="1875" cy="385" r="5" fill="#fff" stroke="#222" stroke-width="0.8"/><g stroke="#1e1e1e" stroke-width="0.6"><polygon points="1868,381 1875,384.5 1868,388 1861,384.5" fill="#fff"/><polygon points="1861,384.5 1868,388 1868,397 1861,393.5" fill="#555"/><polygon points="1868,388 1875,384.5 1875,393.5 1868,397" fill="#2a2a2a"/></g><path d="M1860,425 Q1870,414 1880,425 Q1870,436 1860,425 Z" fill="#fff" stroke="#222" stroke-width="1.2"/><circle cx="1870" cy="425" r="3.7" fill="#666"/><path d="M1861,453 L1872,453 L1879,466 L1865,466 Z" fill="#fff" stroke="#222" stroke-width="1.1"/><path d="M1862.5,457.5 H1874 M1864,462 H1877 M1866,453 L1869,466 M1870,453 L1873,466" stroke="#222" stroke-width="0.9"/><path d="M1868,458 Q1874,450 1881,458 Q1874,465 1868,458Z" fill="#fff" stroke="#222" stroke-width="1"/><circle cx="1874.5" cy="457.5" r="2.5" fill="#666"/><g transform="translate(1860.0,497.0) scale(0.580)"><g stroke="#1e1e1e" stroke-width="0.7" stroke-linejoin="round"><polygon points="12,3 21,7.5 12,12 3,7.5" fill="#fff"/><polygon points="3,7.5 12,12 12,22 3,17.5" fill="#6e6e6e"/><polygon points="12,12 21,7.5 21,17.5 12,22" fill="#2a2a2a"/></g></g><path d="M1861,516 L1879,496" stroke="#222" stroke-width="1.5"/><path d="M1873,499 Q1878,490 1882,496 Q1880,502 1875,503" fill="none" stroke="#222" stroke-width="0.9"/><rect x="1860" y="496" width="1.6" height="1.6" fill="#222"/><rect x="1880" y="513" width="1.6" height="1.6" fill="#222"/></svg>
<div class="abs" style="left:1912px;top:0;width:8px;height:957px;background:#b9c0c0"></div>
<div class="abs" style="left:1912px;top:423px;width:8px;height:150px;background:#0399cb"></div>
<svg class="abs" style="left:1912px;top:490px" width="8" height="14"><path d="M1.5,7 L6.5,2 V12Z" fill="#fff"/></svg>
</div>
<div class="abs" id="top"></div>
<div class="abs" id="title">
 <svg class="abs" style="left:0;top:0" width="24" height="23"><polygon points="2,4.5 18,4.5 10,17" fill="#149bd7"/><polygon points="18,4.5 10,9.5 10,17" fill="#0d6f9c"/></svg>
 <div class="abs" style="left:23px;top:4px;font-size:11.5px;letter-spacing:-0.2px;color:#111;white-space:nowrap">sc-3000_001*</div>
 <svg class="abs" style="left:1790px;top:0" width="130" height="23"><path d="M9.5,10.5 H19.5" stroke="#111" stroke-width="1"/><rect x="54.5" y="7.5" width="8" height="8" fill="none" stroke="#111"/><path d="M56.5,7.5 V5.5 H64.5 V13.5 H62.5" fill="none" stroke="#111"/><path d="M100.5,5.5 L110.5,15.5 M110.5,5.5 L100.5,15.5" stroke="#111" stroke-width="1.1"/></svg>
</div>
<div class="abs" id="tb">
 <svg class="abs" style="left:8px;top:8px" width="44" height="44"><defs><linearGradient id="lg" x1="0" y1="0" x2="1" y2="1"><stop offset="0" stop-color="#c9d5dc"/><stop offset="1" stop-color="#9db5c1"/></linearGradient></defs><rect x="0.5" y="0.5" width="43" height="43" rx="8" fill="url(#lg)"/><polygon points="5,11 38,11 30,18.5 22,18.5" fill="#bfe6f5"/><polygon points="5,11 22,18.5 22,36" fill="#1aa2dc"/><polygon points="38,11 22,18.5 22,36" fill="#13698f"/><polygon points="22,36 38,11 43,17 43,35 35,43 28,43" fill="#6b9cb0" opacity="0.8"/></svg>
 <div class="abs" style="left:64px;top:14px;font-size:14px;color:#555;letter-spacing:-0.6px;white-space:nowrap">AUTODESK<span style="font-size:7px;vertical-align:top">&#174;</span></div>
 <div class="abs" style="left:64px;top:29px;font-size:14px;color:#4a4a4a;font-weight:bold;letter-spacing:-0.1px;white-space:nowrap">123D<span style="font-size:7px;vertical-align:top">&#174;</span> DESIGN</div>
 <svg class="abs" style="left:196px;top:28px" width="18" height="12"><path d="M2.5,3 L9,8.5 L15.5,3" fill="none" stroke="#222" stroke-width="2"/></svg>
</div>
<svg width="1920" height="60" viewBox="0 31 1920 60" style="position:absolute;left:0;top:31px"><path d="M636,58 L645,51.5 L645,55 Q652,54.5 656,61 L655,62.5 Q651,59 645,59.5 L645,63.5 Z" fill="#1e1e1e"/><path d="M698,58 L689,51.5 L689,55 Q682,54.5 678,61 L679,62.5 Q683,59 689,59.5 L689,63.5 Z" fill="#b4b4b4"/><line x1="730.5" y1="46" x2="730.5" y2="72" stroke="#8c8c8c" stroke-width="1"/><line x1="816.5" y1="46" x2="816.5" y2="72" stroke="#8c8c8c" stroke-width="1"/><line x1="1246.5" y1="46" x2="1246.5" y2="72" stroke="#8c8c8c" stroke-width="1"/><rect x="764.5" y="49.5" width="20" height="20" fill="none" stroke="#222" stroke-width="0.9" stroke-dasharray="1.2,1.2"/><g transform="translate(766.0,53.0) scale(0.720)"><g stroke="#1e1e1e" stroke-width="0.7" stroke-linejoin="round"><polygon points="12,3 21,7.5 12,12 3,7.5" fill="#fff"/><polygon points="3,7.5 12,12 12,22 3,17.5" fill="#6e6e6e"/><polygon points="12,12 21,7.5 21,17.5 12,22" fill="#2a2a2a"/></g></g><path d="M781,45 v11 M775.5,50.5 h11" stroke="#222" stroke-width="1.3"/><path d="M781,44 l-2,2.5 h4z M781,57 l-2,-2.5 h4z M774.5,50.5 l2.5,-2 v4z M787.5,50.5 l-2.5,-2 v4z" fill="#222"/><circle cx="866" cy="54" r="6" fill="#fff" stroke="#222" stroke-width="1"/><g transform="translate(848.0,47.0) scale(1.000)"><g stroke="#1e1e1e" stroke-width="0.7" stroke-linejoin="round"><polygon points="12,3 21,7.5 12,12 3,7.5" fill="#fff"/><polygon points="3,7.5 12,12 12,22 3,17.5" fill="#6e6e6e"/><polygon points="12,12 21,7.5 21,17.5 12,22" fill="#2a2a2a"/></g></g><path d="M903,52 Q893,50 893,58 Q894,65 900,67" fill="none" stroke="#222" stroke-width="1"/><circle cx="903" cy="53" r="1.8" fill="#222"/><circle cx="896" cy="63" r="1.8" fill="#222"/><path d="M913,48 L916,51 L903,66 L899,68 L900,64 Z" fill="#2a2a2a"/><g transform="translate(934.0,48.0) scale(0.950)"><g stroke="#1e1e1e" stroke-width="0.7" stroke-linejoin="round"><polygon points="12,3 21,7.5 12,12 3,7.5" fill="#fff"/><polygon points="3,7.5 12,12 12,22 3,17.5" fill="#6e6e6e"/><polygon points="12,12 21,7.5 21,17.5 12,22" fill="#2a2a2a"/></g></g><path d="M953,46 L955,47.5 L947,57 L945,56 Z" fill="#2a2a2a"/><g transform="translate(976.0,49.0) scale(0.950)"><g stroke="#1e1e1e" stroke-width="0.7" stroke-linejoin="round"><polygon points="12,3 21,7.5 12,12 3,7.5" fill="#fff"/><polygon points="3,7.5 12,12 12,22 3,17.5" fill="#6e6e6e"/><polygon points="12,12 21,7.5 21,17.5 12,22" fill="#2a2a2a"/></g></g><path d="M995,60 V48 M995,60 H1002" stroke="#222" stroke-width="1.1" fill="none"/><path d="M995,46 l-2,3 h4z M1004,60 l-3,-2 v4z" fill="#222"/><g transform="translate(1021.0,48.0) scale(0.450)"><g stroke="#1e1e1e" stroke-width="0.7" stroke-linejoin="round"><polygon points="12,3 21,7.5 12,12 3,7.5" fill="#fff"/><polygon points="3,7.5 12,12 12,22 3,17.5" fill="#6e6e6e"/><polygon points="12,12 21,7.5 21,17.5 12,22" fill="#2a2a2a"/></g></g><g transform="translate(1031.0,48.0) scale(0.450)"><g stroke="#1e1e1e" stroke-width="0.7" stroke-linejoin="round"><polygon points="12,3 21,7.5 12,12 3,7.5" fill="#fff"/><polygon points="3,7.5 12,12 12,22 3,17.5" fill="#6e6e6e"/><polygon points="12,12 21,7.5 21,17.5 12,22" fill="#2a2a2a"/></g></g><g transform="translate(1021.0,58.0) scale(0.450)"><g stroke="#1e1e1e" stroke-width="0.7" stroke-linejoin="round"><polygon points="12,3 21,7.5 12,12 3,7.5" fill="#fff"/><polygon points="3,7.5 12,12 12,22 3,17.5" fill="#6e6e6e"/><polygon points="12,12 21,7.5 21,17.5 12,22" fill="#2a2a2a"/></g></g><g transform="translate(1031.0,58.0) scale(0.450)"><g stroke="#1e1e1e" stroke-width="0.7" stroke-linejoin="round"><polygon points="12,3 21,7.5 12,12 3,7.5" fill="#fff"/><polygon points="3,7.5 12,12 12,22 3,17.5" fill="#6e6e6e"/><polygon points="12,12 21,7.5 21,17.5 12,22" fill="#2a2a2a"/></g></g><circle cx="1081" cy="56" r="5.5" fill="#fff" stroke="#222" stroke-width="1"/><g transform="translate(1065.0,54.0) scale(0.700)"><g stroke="#1e1e1e" stroke-width="0.7" stroke-linejoin="round"><polygon points="12,3 21,7.5 12,12 3,7.5" fill="#fff"/><polygon points="3,7.5 12,12 12,22 3,17.5" fill="#6e6e6e"/><polygon points="12,12 21,7.5 21,17.5 12,22" fill="#2a2a2a"/></g></g><rect x="1065" y="49" width="2" height="2" fill="#222"/><rect x="1085" y="49" width="2" height="2" fill="#222"/><rect x="1065" y="69" width="2" height="2" fill="#222"/><rect x="1085" y="69" width="2" height="2" fill="#222"/><g stroke="#1e1e1e" stroke-width="0.7"><polygon points="1119,50 1129,55 1119,60 1109,55" fill="#fff"/><polygon points="1109,55 1119,60 1117,70 1109,65.5" fill="#6e6e6e"/><polygon points="1119,60 1129,55 1129,65 1117,70" fill="#2a2a2a"/><line x1="1114" y1="52.5" x2="1124" y2="57.5" stroke="#222"/></g><path d="M1151,58 L1161,49 Q1168,44 1172,51 Q1174,57 1168,62 L1159,71" fill="none" stroke="#222" stroke-width="5.2"/><path d="M1151,58 L1161,49 Q1168,44 1172,51 Q1174,57 1168,62 L1159,71" fill="none" stroke="#fff" stroke-width="3"/><path d="M1150,57 l3.5,-3.5 l3.5,3.5 l-3.5,3.5z M1158,68 l3.5,-3.5 l3.5,3.5 l-3.5,3.5z" fill="#222"/><path d="M1194.5,49.5 H1199.5 V64.5 H1213.5 V69.5 H1194.5 Z" fill="#fff" stroke="#222" stroke-width="1"/><path d="M1197,52 h2 M1197,55 h2 M1197,58 h2 M1197,61 h2 M1202,65 v2 M1205,65 v2 M1208,65 v2 M1211,65 v2" stroke="#222" stroke-width="0.7"/><polygon points="1280,55 1290,50 1301,56 1291,61" fill="#fff" stroke="#222" stroke-width="0.9"/><polygon points="1280,58 1290,53 1301,59 1291,64" fill="#fff" stroke="#222" stroke-width="0.9"/><polygon points="1280,61 1290,56 1301,62 1291,67" fill="#fff" stroke="#222" stroke-width="0.9"/><polygon points="1280,64 1290,59 1301,65 1291,70" fill="#fff" stroke="#222" stroke-width="0.9"/><polygon points="1280,67 1290,62 1301,68 1291,73" fill="#fff" stroke="#222" stroke-width="0.9"/><polygon points="1280,53 1290,48 1301,53 1291,58" fill="#fff" stroke="#222" stroke-width="0.9"/><path d="M793,83 l3,-3 v3z" fill="#9a9a9a"/><path d="M879,83 l3,-3 v3z" fill="#9a9a9a"/><path d="M923,83 l3,-3 v3z" fill="#9a9a9a"/><path d="M965,83 l3,-3 v3z" fill="#9a9a9a"/><path d="M1008,83 l3,-3 v3z" fill="#9a9a9a"/><path d="M1051,83 l3,-3 v3z" fill="#9a9a9a"/><path d="M1094,83 l3,-3 v3z" fill="#9a9a9a"/><path d="M1137,83 l3,-3 v3z" fill="#9a9a9a"/></svg>
<div class="btn" style="left:1699px;width:101px">Go Premium</div>
<div class="btn" style="left:1806px;width:69px">Sign In</div>
<div class="abs" style="left:1881px;top:44px;width:34px;height:34px;border:1px solid #a9a9a9;background:linear-gradient(#f7f7f7,#d6d6d6);font-size:21px;line-height:32px;text-align:center;color:#333">?</div>
<div class="abs" id="rblack"></div>
<div class="abs" id="task"><div class="abs" style="left:48px;top:0;width:344px;height:8px;background:#f2f2f2;border-top:1px solid #c4c4c4"></div><div class="abs" style="left:834px;top:0;width:44px;height:8px;background:#2f2f2f"></div><div class="abs" style="left:879px;top:0;width:3px;height:8px;background:#262626"></div><div class="abs" style="left:1781px;top:5px;width:26px;height:3px;background:repeating-linear-gradient(90deg,#eee 0 5px,transparent 5px 7px)"></div></div>
<div class="abs" style="left:1600px;top:952px;width:320px;height:96px;background:#fff;border:1px solid #9a9a9a">
 <svg class="abs" style="left:12px;top:13px" width="66" height="66"><rect width="66" height="66" fill="#8fc4ec"/><rect x="40" y="0" width="26" height="30" fill="#4f9fe0"/><path d="M0,10 Q12,-4 30,6 Q40,14 38,34 L20,40 L0,36Z" fill="#e9a9bd"/><ellipse cx="18" cy="26" rx="11" ry="12" fill="#fbe7e4"/><path d="M30,30 Q44,14 62,28 L64,52 L34,56Z" fill="#ee9fb8"/><ellipse cx="46" cy="40" rx="11" ry="12" fill="#fde9e6"/><path d="M4,44 L26,40 L30,60 L6,62Z" fill="#4a4050"/><rect x="0" y="54" width="34" height="12" fill="#f2c6d4"/><rect x="34" y="56" width="32" height="10" fill="#e6eef6"/><circle cx="16" cy="28" r="2" fill="#c0394f"/><circle cx="44" cy="42" r="2" fill="#c0394f"/></svg>
 <div class="abs" style="left:85px;top:9px;width:225px;overflow:hidden;font-size:12.5px;color:#222;white-space:nowrap">ポイント山分けキャンペーン！</div>
 <div class="abs" style="left:86px;top:33px;width:226px;overflow:hidden;font-size:11.6px;color:#222;line-height:16px;white-space:nowrap">「マギアレコード」２周年記念！総額2222<br>万ポイント山分けキャンペーンを開催！...</div>
 <div class="abs" style="left:208px;top:73px;font-size:10px;color:#9a9a9a;white-space:nowrap">DMM GAME PLAYER</div>
 <svg class="abs" style="left:290px;top:8px" width="16" height="16"><path d="M2,2 L14,14 M14,2 L2,14" stroke="#888" stroke-width="1.4"/></svg>
</div>
</body></html>
